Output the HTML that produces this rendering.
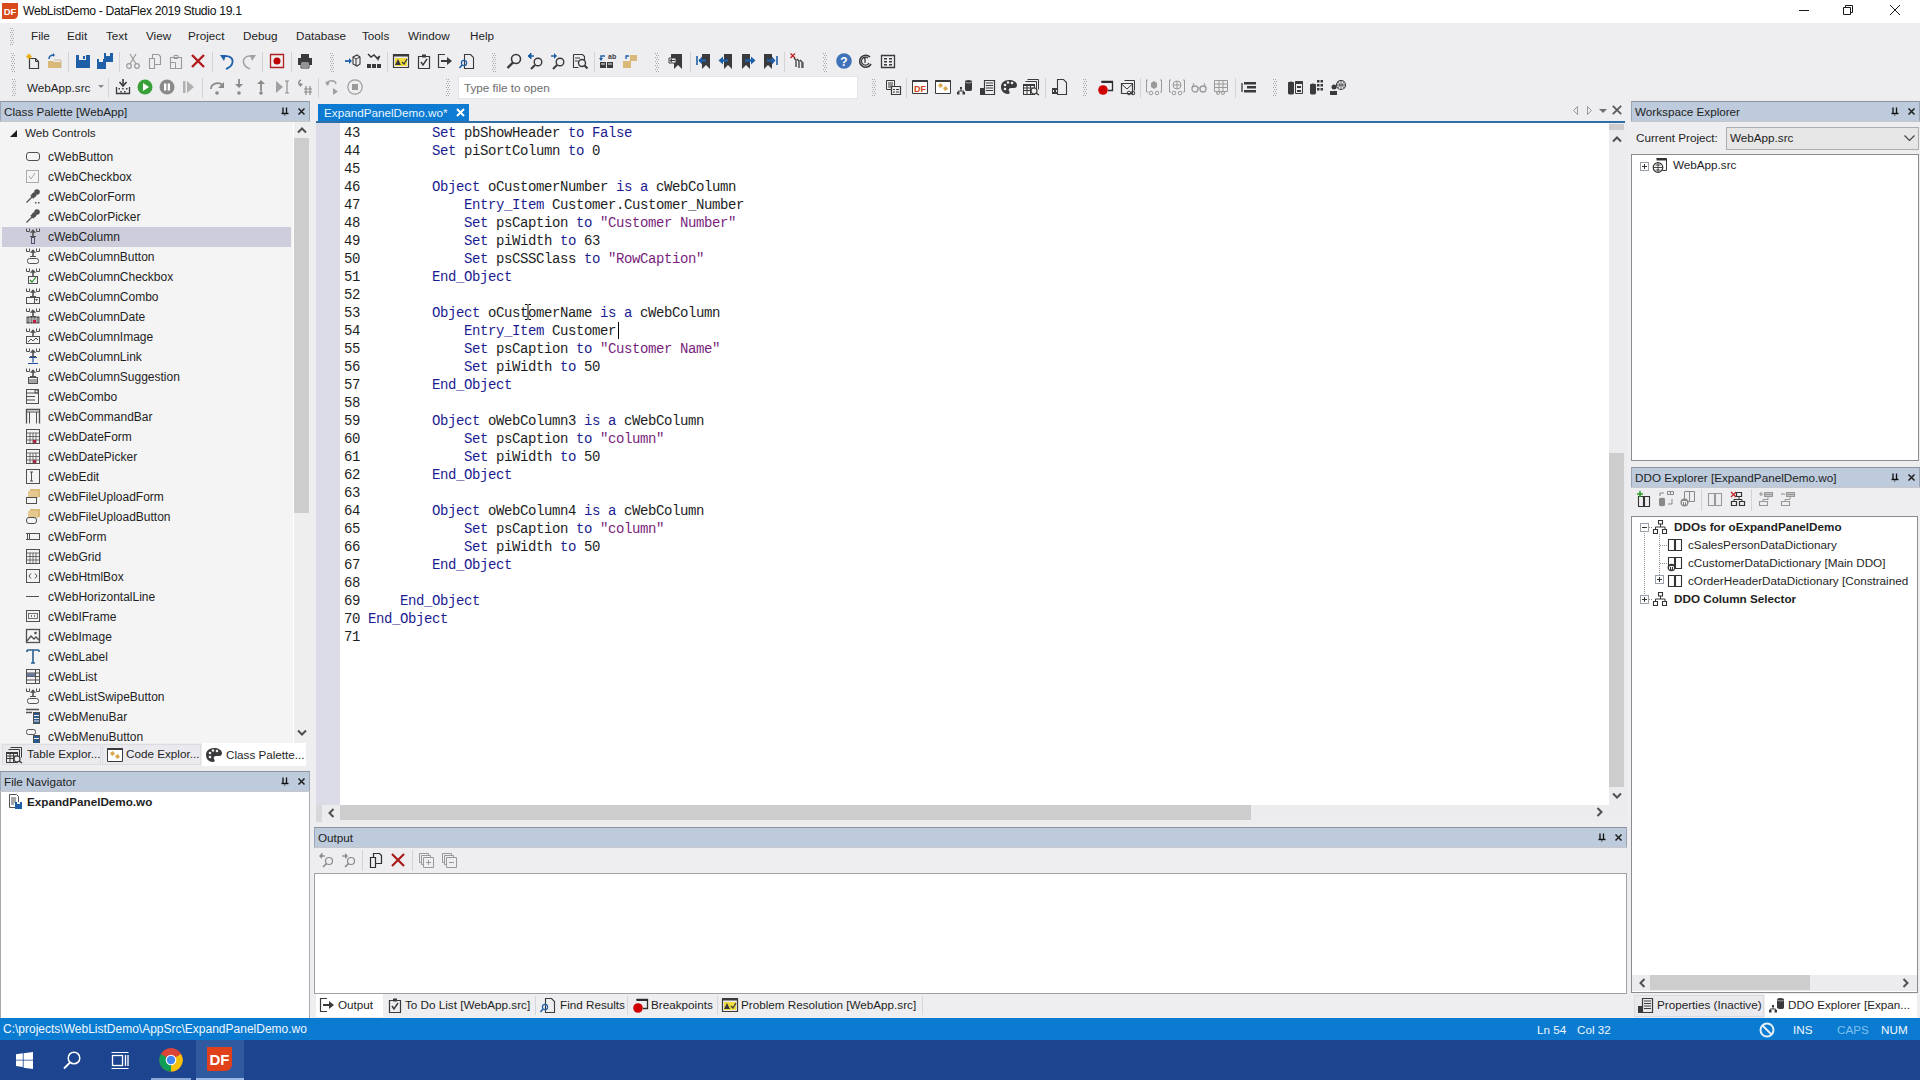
<!DOCTYPE html>
<html><head><meta charset="utf-8"><style>*{box-sizing:border-box;margin:0;padding:0}
html,body{width:1920px;height:1080px;overflow:hidden;background:#eeeef0;font-family:"Liberation Sans",sans-serif;font-size:12px;color:#1e1e1e}
.a{position:absolute}
.t{position:absolute;white-space:nowrap;line-height:15px}
svg{position:absolute;overflow:visible}
.code{position:absolute;font-family:"Liberation Mono",monospace;font-size:14px;letter-spacing:-0.4px;line-height:18px;white-space:pre;color:#1e1e1e}
.k{color:#1c1c92}
.s{color:#7a1f7e}
</style></head><body>
<div class="a" style="left:0px;top:0px;width:1920px;height:23px;background:#ffffff;"></div>
<svg style="left:2px;top:3px" width="16" height="16" viewBox="0 0 16 16"><path d="M0 0h16v11c0 3-2 5-5 5H0z" fill="#d84a1b"/><text x="8" y="12" font-size="9.5" font-family="Liberation Sans" font-weight="bold" fill="#fff" text-anchor="middle">DF</text></svg>
<div class="t" style="left:23px;top:4px;font-size:12.2px;color:#111;letter-spacing:-0.33px">WebListDemo - DataFlex 2019 Studio 19.1</div>
<div class="a" style="left:1799px;top:10px;width:10px;height:1px;background:#1a1a1a;"></div>
<svg style="left:1843px;top:5px" width="10" height="10" viewBox="0 0 10 10"><path d="M.5 2.5h7v7h-7z" fill="none" stroke="#1a1a1a"/><path d="M2.5 2.5V.5h7v7h-2" fill="none" stroke="#1a1a1a"/></svg>
<svg style="left:1890px;top:5px" width="10" height="10" viewBox="0 0 10 10"><path d="M0 0l10 10M10 0L0 10" stroke="#1a1a1a" stroke-width="1"/></svg>
<div class="a" style="left:10px;top:28px;width:1px;height:1px;background:#a8a8b0"></div><div class="a" style="left:11px;top:30px;width:1px;height:1px;background:#a8a8b0"></div><div class="a" style="left:10px;top:32px;width:1px;height:1px;background:#a8a8b0"></div><div class="a" style="left:11px;top:34px;width:1px;height:1px;background:#a8a8b0"></div><div class="a" style="left:10px;top:36px;width:1px;height:1px;background:#a8a8b0"></div><div class="a" style="left:11px;top:38px;width:1px;height:1px;background:#a8a8b0"></div><div class="a" style="left:10px;top:40px;width:1px;height:1px;background:#a8a8b0"></div><div class="a" style="left:11px;top:42px;width:1px;height:1px;background:#a8a8b0"></div><div class="a" style="left:10px;top:44px;width:1px;height:1px;background:#a8a8b0"></div><div class="a" style="left:12px;top:28px;width:1px;height:1px;background:#a8a8b0"></div><div class="a" style="left:13px;top:30px;width:1px;height:1px;background:#a8a8b0"></div><div class="a" style="left:12px;top:32px;width:1px;height:1px;background:#a8a8b0"></div><div class="a" style="left:13px;top:34px;width:1px;height:1px;background:#a8a8b0"></div><div class="a" style="left:12px;top:36px;width:1px;height:1px;background:#a8a8b0"></div><div class="a" style="left:13px;top:38px;width:1px;height:1px;background:#a8a8b0"></div><div class="a" style="left:12px;top:40px;width:1px;height:1px;background:#a8a8b0"></div><div class="a" style="left:13px;top:42px;width:1px;height:1px;background:#a8a8b0"></div><div class="a" style="left:12px;top:44px;width:1px;height:1px;background:#a8a8b0"></div>
<div class="t" style="left:31px;top:28px;font-size:11.7px;color:#1e1e1e;">File</div>
<div class="t" style="left:67px;top:28px;font-size:11.7px;color:#1e1e1e;">Edit</div>
<div class="t" style="left:106px;top:28px;font-size:11.7px;color:#1e1e1e;">Text</div>
<div class="t" style="left:146px;top:28px;font-size:11.7px;color:#1e1e1e;">View</div>
<div class="t" style="left:188px;top:28px;font-size:11.7px;color:#1e1e1e;">Project</div>
<div class="t" style="left:243px;top:28px;font-size:11.7px;color:#1e1e1e;">Debug</div>
<div class="t" style="left:296px;top:28px;font-size:11.7px;color:#1e1e1e;">Database</div>
<div class="t" style="left:362px;top:28px;font-size:11.7px;color:#1e1e1e;">Tools</div>
<div class="t" style="left:408px;top:28px;font-size:11.7px;color:#1e1e1e;">Window</div>
<div class="t" style="left:470px;top:28px;font-size:11.7px;color:#1e1e1e;">Help</div>
<div class="a" style="left:11px;top:53px;width:1px;height:1px;background:#a8a8b0"></div><div class="a" style="left:12px;top:55px;width:1px;height:1px;background:#a8a8b0"></div><div class="a" style="left:11px;top:57px;width:1px;height:1px;background:#a8a8b0"></div><div class="a" style="left:12px;top:59px;width:1px;height:1px;background:#a8a8b0"></div><div class="a" style="left:11px;top:61px;width:1px;height:1px;background:#a8a8b0"></div><div class="a" style="left:12px;top:63px;width:1px;height:1px;background:#a8a8b0"></div><div class="a" style="left:11px;top:65px;width:1px;height:1px;background:#a8a8b0"></div><div class="a" style="left:12px;top:67px;width:1px;height:1px;background:#a8a8b0"></div><div class="a" style="left:11px;top:69px;width:1px;height:1px;background:#a8a8b0"></div><div class="a" style="left:12px;top:71px;width:1px;height:1px;background:#a8a8b0"></div><div class="a" style="left:13px;top:53px;width:1px;height:1px;background:#a8a8b0"></div><div class="a" style="left:14px;top:55px;width:1px;height:1px;background:#a8a8b0"></div><div class="a" style="left:13px;top:57px;width:1px;height:1px;background:#a8a8b0"></div><div class="a" style="left:14px;top:59px;width:1px;height:1px;background:#a8a8b0"></div><div class="a" style="left:13px;top:61px;width:1px;height:1px;background:#a8a8b0"></div><div class="a" style="left:14px;top:63px;width:1px;height:1px;background:#a8a8b0"></div><div class="a" style="left:13px;top:65px;width:1px;height:1px;background:#a8a8b0"></div><div class="a" style="left:14px;top:67px;width:1px;height:1px;background:#a8a8b0"></div><div class="a" style="left:13px;top:69px;width:1px;height:1px;background:#a8a8b0"></div><div class="a" style="left:14px;top:71px;width:1px;height:1px;background:#a8a8b0"></div>
<svg style="left:25px;top:53px" width="16" height="16" viewBox="0 0 16 16"><path d="M4.5 5.5h6l3 3v7h-9z" fill="none" stroke="#3a3a3c" stroke-width="1.2"/><path d="M10.5 5.5v3h3" fill="none" stroke="#3a3a3c"/><circle cx="4" cy="3.5" r="2" fill="#f0b400"/><path d="M1 3.5h6M4 .5v6M2 1.5l4 4M6 1.5l-4 4" stroke="#e6a800" stroke-width=".7"/></svg>
<svg style="left:47px;top:53px" width="16" height="16" viewBox="0 0 16 16"><path d="M1 8h5l1 1h7v6H1z" fill="#d9b878"/><path d="M7 7h7v8" fill="none" stroke="#c8b89a"/><path d="M2 6c0-3 2-4 5-4" fill="none" stroke="#1f5fa8" stroke-width="1.5"/><path d="M6 0l2 2-2 2z" fill="#1f5fa8"/></svg>
<div class="a" style="left:68px;top:52px;width:1px;height:20px;background:#d2d2d8;"></div>
<svg style="left:75px;top:53px" width="16" height="16" viewBox="0 0 16 16"><path d="M1 2h14v13H1z" fill="#1f5fa8"/><path d="M4 2h7v5H4z" fill="#eeeef0"/><path d="M8 3h2v3H8z" fill="#1f5fa8"/></svg>
<svg style="left:97px;top:53px" width="16" height="16" viewBox="0 0 16 16"><path d="M7 0h9v9H7z" fill="#1f5fa8"/><path d="M9 0h4v3H9z" fill="#eeeef0"/><path d="M0 6h9v10H0z" fill="#1f5fa8"/><path d="M2 6h4v3H2z" fill="#eeeef0"/></svg>
<div class="a" style="left:119px;top:52px;width:1px;height:20px;background:#d2d2d8;"></div>
<svg style="left:125px;top:53px" width="16" height="16" viewBox="0 0 16 16"><circle cx="4" cy="13" r="2.3" fill="none" stroke="#9a9a9a" stroke-width="1.2"/><circle cx="12" cy="13" r="2.3" fill="none" stroke="#9a9a9a" stroke-width="1.2"/><path d="M5 11L11 1M11 11L5 1" stroke="#9a9a9a" stroke-width="1.2"/></svg>
<svg style="left:147px;top:53px" width="16" height="16" viewBox="0 0 16 16"><path d="M5.5 1.5h6l2 2v8h-8z" fill="none" stroke="#9a9a9a" stroke-width="1.1"/><path d="M2.5 5.5h5v10h-5z" fill="#eeeef0" stroke="#9a9a9a" stroke-width="1.1"/></svg>
<svg style="left:168px;top:53px" width="16" height="16" viewBox="0 0 16 16"><path d="M2.5 4.5h11v11h-11z" fill="none" stroke="#9a9a9a" stroke-width="1.1"/><path d="M6 2.5h4v3H6z" fill="none" stroke="#9a9a9a"/><path d="M2.5 9.5h5v6" fill="none" stroke="#9a9a9a"/></svg>
<svg style="left:190px;top:53px" width="16" height="16" viewBox="0 0 16 16"><path d="M2 2l12 12M14 2L2 14" stroke="#b01c1c" stroke-width="2.4"/></svg>
<div class="a" style="left:212px;top:52px;width:1px;height:20px;background:#d2d2d8;"></div>
<svg style="left:219px;top:53px" width="16" height="16" viewBox="0 0 16 16"><path d="M3 4c8-3 12 2 10 7-1 3-4 4-6 5" fill="none" stroke="#1f5fa8" stroke-width="1.8"/><path d="M1 2l6 0-2 6z" fill="#1f5fa8"/></svg>
<svg style="left:241px;top:53px" width="16" height="16" viewBox="0 0 16 16"><path d="M13 4c-8-3-12 2-10 7 1 3 4 4 6 5" fill="none" stroke="#a0a0a0" stroke-width="1.5"/><path d="M15 2l-6 0 2 6z" fill="#a0a0a0"/></svg>
<div class="a" style="left:262px;top:52px;width:1px;height:20px;background:#d2d2d8;"></div>
<svg style="left:269px;top:53px" width="16" height="16" viewBox="0 0 16 16"><path d="M1.5 1.5h13v13h-13z" fill="none" stroke="#b02020" stroke-width="1.3"/><circle cx="8" cy="8" r="3.5" fill="#c00000"/></svg>
<div class="a" style="left:291px;top:52px;width:1px;height:20px;background:#d2d2d8;"></div>
<svg style="left:297px;top:53px" width="16" height="16" viewBox="0 0 16 16"><path d="M4 1h8v4H4z" fill="#3a3a3c"/><path d="M1 5h14v7H1z" fill="#3a3a3c"/><path d="M4 9h8v6H4z" fill="#eeeef0" stroke="#3a3a3c"/><path d="M5 11h6M5 13h6" stroke="#3a3a3c"/></svg>
<div class="a" style="left:330px;top:53px;width:1px;height:1px;background:#a8a8b0"></div><div class="a" style="left:331px;top:55px;width:1px;height:1px;background:#a8a8b0"></div><div class="a" style="left:330px;top:57px;width:1px;height:1px;background:#a8a8b0"></div><div class="a" style="left:331px;top:59px;width:1px;height:1px;background:#a8a8b0"></div><div class="a" style="left:330px;top:61px;width:1px;height:1px;background:#a8a8b0"></div><div class="a" style="left:331px;top:63px;width:1px;height:1px;background:#a8a8b0"></div><div class="a" style="left:330px;top:65px;width:1px;height:1px;background:#a8a8b0"></div><div class="a" style="left:331px;top:67px;width:1px;height:1px;background:#a8a8b0"></div><div class="a" style="left:330px;top:69px;width:1px;height:1px;background:#a8a8b0"></div><div class="a" style="left:331px;top:71px;width:1px;height:1px;background:#a8a8b0"></div><div class="a" style="left:332px;top:53px;width:1px;height:1px;background:#a8a8b0"></div><div class="a" style="left:333px;top:55px;width:1px;height:1px;background:#a8a8b0"></div><div class="a" style="left:332px;top:57px;width:1px;height:1px;background:#a8a8b0"></div><div class="a" style="left:333px;top:59px;width:1px;height:1px;background:#a8a8b0"></div><div class="a" style="left:332px;top:61px;width:1px;height:1px;background:#a8a8b0"></div><div class="a" style="left:333px;top:63px;width:1px;height:1px;background:#a8a8b0"></div><div class="a" style="left:332px;top:65px;width:1px;height:1px;background:#a8a8b0"></div><div class="a" style="left:333px;top:67px;width:1px;height:1px;background:#a8a8b0"></div><div class="a" style="left:332px;top:69px;width:1px;height:1px;background:#a8a8b0"></div><div class="a" style="left:333px;top:71px;width:1px;height:1px;background:#a8a8b0"></div>
<svg style="left:344px;top:53px" width="16" height="16" viewBox="0 0 16 16"><path d="M1 8h6" stroke="#1f5fa8" stroke-width="1.8"/><path d="M5 5l3 3-3 3z" fill="#1f5fa8"/><path d="M9 4l4-2 3 2v7l-3 2-4-2z" fill="none" stroke="#3a3a3c" stroke-width="1.1"/><path d="M9 4l3 2 4-2M12 6v7" fill="none" stroke="#3a3a3c"/></svg>
<svg style="left:366px;top:53px" width="16" height="16" viewBox="0 0 16 16"><path d="M1 11h4v4H1zM6 11h4v4H6zM11 11h4v4h-4z" fill="#3a3a3c"/><path d="M2 1l3 3 3-2 3 3 3-2" fill="none" stroke="#3a3a3c" stroke-width="1.5"/><path d="M10 4l2 4 2-4z" fill="#3a3a3c"/></svg>
<div class="a" style="left:387px;top:52px;width:1px;height:20px;background:#d2d2d8;"></div>
<svg style="left:393px;top:53px" width="16" height="16" viewBox="0 0 16 16"><path d="M.5 1.5h15v13H.5z" fill="none" stroke="#3a3a3c" stroke-width="1.2"/><path d="M.5 1.5h15v2H.5z" fill="#3a3a3c"/><path d="M2 5h12v8H2z" fill="#f0dc40"/><path d="M5 6l-3 6h6z" fill="#3a3a3c"/><path d="M9 9l2 2 3-5" fill="none" stroke="#3a3a3c" stroke-width="1.3"/></svg>
<svg style="left:416px;top:53px" width="16" height="16" viewBox="0 0 16 16"><path d="M2.5 3.5h11v12h-11z" fill="none" stroke="#3a3a3c" stroke-width="1.2"/><path d="M6 1.5h4v3H6z" fill="#3a3a3c"/><path d="M5 9l2 3 4-6" fill="none" stroke="#3a3a3c" stroke-width="1.4"/></svg>
<svg style="left:437px;top:53px" width="16" height="16" viewBox="0 0 16 16"><path d="M8 1.5H1.5v13H8" fill="none" stroke="#3a3a3c" stroke-width="1.2"/><path d="M4 8h9" stroke="#3a3a3c" stroke-width="2"/><path d="M10 4l5 4-5 4z" fill="#3a3a3c"/></svg>
<svg style="left:459px;top:53px" width="16" height="16" viewBox="0 0 16 16"><path d="M5.5 1.5h6l3 3v11h-9z" fill="none" stroke="#3a3a3c" stroke-width="1.1"/><circle cx="5" cy="10" r="2.6" fill="none" stroke="#1f5fa8" stroke-width="1.2"/><path d="M3 12l-2.5 3" stroke="#1f5fa8" stroke-width="1.5"/></svg>
<div class="a" style="left:492px;top:53px;width:1px;height:1px;background:#a8a8b0"></div><div class="a" style="left:493px;top:55px;width:1px;height:1px;background:#a8a8b0"></div><div class="a" style="left:492px;top:57px;width:1px;height:1px;background:#a8a8b0"></div><div class="a" style="left:493px;top:59px;width:1px;height:1px;background:#a8a8b0"></div><div class="a" style="left:492px;top:61px;width:1px;height:1px;background:#a8a8b0"></div><div class="a" style="left:493px;top:63px;width:1px;height:1px;background:#a8a8b0"></div><div class="a" style="left:492px;top:65px;width:1px;height:1px;background:#a8a8b0"></div><div class="a" style="left:493px;top:67px;width:1px;height:1px;background:#a8a8b0"></div><div class="a" style="left:492px;top:69px;width:1px;height:1px;background:#a8a8b0"></div><div class="a" style="left:493px;top:71px;width:1px;height:1px;background:#a8a8b0"></div><div class="a" style="left:494px;top:53px;width:1px;height:1px;background:#a8a8b0"></div><div class="a" style="left:495px;top:55px;width:1px;height:1px;background:#a8a8b0"></div><div class="a" style="left:494px;top:57px;width:1px;height:1px;background:#a8a8b0"></div><div class="a" style="left:495px;top:59px;width:1px;height:1px;background:#a8a8b0"></div><div class="a" style="left:494px;top:61px;width:1px;height:1px;background:#a8a8b0"></div><div class="a" style="left:495px;top:63px;width:1px;height:1px;background:#a8a8b0"></div><div class="a" style="left:494px;top:65px;width:1px;height:1px;background:#a8a8b0"></div><div class="a" style="left:495px;top:67px;width:1px;height:1px;background:#a8a8b0"></div><div class="a" style="left:494px;top:69px;width:1px;height:1px;background:#a8a8b0"></div><div class="a" style="left:495px;top:71px;width:1px;height:1px;background:#a8a8b0"></div>
<svg style="left:506px;top:53px" width="16" height="16" viewBox="0 0 16 16"><circle cx="10" cy="6" r="4.5" fill="none" stroke="#3a3a3c" stroke-width="1.6"/><path d="M7 9.5L1.5 15" stroke="#3a3a3c" stroke-width="2.4"/></svg>
<svg style="left:528px;top:53px" width="16" height="16" viewBox="0 0 16 16"><circle cx="10" cy="9" r="3.8" fill="none" stroke="#3a3a3c" stroke-width="1.4"/><path d="M7 12l-4 4" stroke="#3a3a3c" stroke-width="2"/><path d="M6 3H1" stroke="#1f5fa8" stroke-width="1.5"/><path d="M3 0v6M3 0L0 3l3 3" fill="#1f5fa8" stroke="#1f5fa8"/></svg>
<svg style="left:550px;top:53px" width="16" height="16" viewBox="0 0 16 16"><circle cx="10" cy="9" r="3.8" fill="none" stroke="#3a3a3c" stroke-width="1.4"/><path d="M7 12l-4 4" stroke="#3a3a3c" stroke-width="2"/><path d="M1 3h5" stroke="#1f5fa8" stroke-width="1.5"/><path d="M4 0l3 3-3 3z" fill="#1f5fa8"/></svg>
<svg style="left:572px;top:53px" width="16" height="16" viewBox="0 0 16 16"><path d="M1.5 1.5h9l2 2v4" fill="none" stroke="#3a3a3c" stroke-width="1.1"/><path d="M1.5 1.5v13h5" fill="none" stroke="#3a3a3c" stroke-width="1.1"/><path d="M3 5h5M3 8h3" stroke="#3a3a3c"/><circle cx="10" cy="10" r="3.5" fill="none" stroke="#3a3a3c" stroke-width="1.4"/><path d="M12.5 12.5l3 3" stroke="#3a3a3c" stroke-width="2"/></svg>
<div class="a" style="left:594px;top:52px;width:1px;height:20px;background:#d2d2d8;"></div>
<svg style="left:599px;top:53px" width="16" height="16" viewBox="0 0 16 16"><path d="M1 9h6v6H1zM8 9h6v6H8z" fill="#3a3a3c"/><path d="M2 11h4M9 11h4" stroke="#eee" stroke-width="1"/><text x="9" y="6" font-size="7" font-family="Liberation Sans" font-weight="bold" fill="#3a3a3c">ab</text><path d="M2 7V3h4" fill="none" stroke="#1f5fa8" stroke-width="1.4"/><path d="M0 5l2 3 2-3z" fill="#1f5fa8"/></svg>
<svg style="left:622px;top:53px" width="16" height="16" viewBox="0 0 16 16"><path d="M8 2h7v6H8z" fill="#d9b878"/><path d="M1 8h8v7H1z" fill="#d9b878"/><path d="M4 6V3h3" fill="none" stroke="#1f5fa8" stroke-width="1.3"/></svg>
<div class="a" style="left:655px;top:53px;width:1px;height:1px;background:#a8a8b0"></div><div class="a" style="left:656px;top:55px;width:1px;height:1px;background:#a8a8b0"></div><div class="a" style="left:655px;top:57px;width:1px;height:1px;background:#a8a8b0"></div><div class="a" style="left:656px;top:59px;width:1px;height:1px;background:#a8a8b0"></div><div class="a" style="left:655px;top:61px;width:1px;height:1px;background:#a8a8b0"></div><div class="a" style="left:656px;top:63px;width:1px;height:1px;background:#a8a8b0"></div><div class="a" style="left:655px;top:65px;width:1px;height:1px;background:#a8a8b0"></div><div class="a" style="left:656px;top:67px;width:1px;height:1px;background:#a8a8b0"></div><div class="a" style="left:655px;top:69px;width:1px;height:1px;background:#a8a8b0"></div><div class="a" style="left:656px;top:71px;width:1px;height:1px;background:#a8a8b0"></div><div class="a" style="left:657px;top:53px;width:1px;height:1px;background:#a8a8b0"></div><div class="a" style="left:658px;top:55px;width:1px;height:1px;background:#a8a8b0"></div><div class="a" style="left:657px;top:57px;width:1px;height:1px;background:#a8a8b0"></div><div class="a" style="left:658px;top:59px;width:1px;height:1px;background:#a8a8b0"></div><div class="a" style="left:657px;top:61px;width:1px;height:1px;background:#a8a8b0"></div><div class="a" style="left:658px;top:63px;width:1px;height:1px;background:#a8a8b0"></div><div class="a" style="left:657px;top:65px;width:1px;height:1px;background:#a8a8b0"></div><div class="a" style="left:658px;top:67px;width:1px;height:1px;background:#a8a8b0"></div><div class="a" style="left:657px;top:69px;width:1px;height:1px;background:#a8a8b0"></div><div class="a" style="left:658px;top:71px;width:1px;height:1px;background:#a8a8b0"></div>
<svg style="left:668px;top:53px" width="16" height="16" viewBox="0 0 16 16"><path d="M3 1h11v15l-4-4-4 4V7H3z" fill="#3a3a3c"/><path d="M1 5h7v5H1z" fill="#eeeef0" stroke="#3a3a3c"/><path d="M2 7.5h5M4 6l-2 1.5L4 9" fill="none" stroke="#3a3a3c"/></svg>
<div class="a" style="left:690px;top:52px;width:1px;height:20px;background:#d2d2d8;"></div>
<svg style="left:696px;top:53px" width="16" height="16" viewBox="0 0 16 16"><path d="M5 1h9v15l-4-4-4 4V1z" fill="#3a3a3c"/><path d="M1 3v9" stroke="#1f5fa8" stroke-width="1.6"/><path d="M3 7.5h7" stroke="#1f5fa8" stroke-width="2.5"/><path d="M6 3.5L2.5 7.5 6 11.5z" fill="#1f5fa8"/></svg>
<svg style="left:718px;top:53px" width="16" height="16" viewBox="0 0 16 16"><path d="M5 1h9v15l-4-4-4 4V1z" fill="#3a3a3c"/><path d="M3 7.5h7" stroke="#1f5fa8" stroke-width="2.5"/><path d="M5 3.5L.5 7.5 5 11.5z" fill="#1f5fa8"/></svg>
<svg style="left:740px;top:53px" width="16" height="16" viewBox="0 0 16 16"><path d="M1 1h9v15l-4-4-4 4V1z" fill="#3a3a3c"/><path d="M5 7.5h7" stroke="#1f5fa8" stroke-width="2.5"/><path d="M11 3.5l4.5 4-4.5 4z" fill="#1f5fa8"/></svg>
<svg style="left:762px;top:53px" width="16" height="16" viewBox="0 0 16 16"><path d="M1 1h9v15l-4-4-4 4V1z" fill="#3a3a3c"/><path d="M15 3v9" stroke="#1f5fa8" stroke-width="1.6"/><path d="M5 7.5h7" stroke="#1f5fa8" stroke-width="2.5"/><path d="M10 3.5l3.5 4-3.5 4z" fill="#1f5fa8"/></svg>
<div class="a" style="left:784px;top:52px;width:1px;height:20px;background:#d2d2d8;"></div>
<svg style="left:790px;top:53px" width="16" height="16" viewBox="0 0 16 16"><path d="M.5 .5l4.5 4.5M5 .5L.5 5" stroke="#c02020" stroke-width="1.3"/><path d="M4 5l2 2v7M7 6l2 2v7M10 7l2 2v6" fill="none" stroke="#3a3a3c" stroke-width="1.3"/><path d="M13 9v6" stroke="#3a3a3c" stroke-width="1"/></svg>
<div class="a" style="left:823px;top:53px;width:1px;height:1px;background:#a8a8b0"></div><div class="a" style="left:824px;top:55px;width:1px;height:1px;background:#a8a8b0"></div><div class="a" style="left:823px;top:57px;width:1px;height:1px;background:#a8a8b0"></div><div class="a" style="left:824px;top:59px;width:1px;height:1px;background:#a8a8b0"></div><div class="a" style="left:823px;top:61px;width:1px;height:1px;background:#a8a8b0"></div><div class="a" style="left:824px;top:63px;width:1px;height:1px;background:#a8a8b0"></div><div class="a" style="left:823px;top:65px;width:1px;height:1px;background:#a8a8b0"></div><div class="a" style="left:824px;top:67px;width:1px;height:1px;background:#a8a8b0"></div><div class="a" style="left:823px;top:69px;width:1px;height:1px;background:#a8a8b0"></div><div class="a" style="left:824px;top:71px;width:1px;height:1px;background:#a8a8b0"></div><div class="a" style="left:825px;top:53px;width:1px;height:1px;background:#a8a8b0"></div><div class="a" style="left:826px;top:55px;width:1px;height:1px;background:#a8a8b0"></div><div class="a" style="left:825px;top:57px;width:1px;height:1px;background:#a8a8b0"></div><div class="a" style="left:826px;top:59px;width:1px;height:1px;background:#a8a8b0"></div><div class="a" style="left:825px;top:61px;width:1px;height:1px;background:#a8a8b0"></div><div class="a" style="left:826px;top:63px;width:1px;height:1px;background:#a8a8b0"></div><div class="a" style="left:825px;top:65px;width:1px;height:1px;background:#a8a8b0"></div><div class="a" style="left:826px;top:67px;width:1px;height:1px;background:#a8a8b0"></div><div class="a" style="left:825px;top:69px;width:1px;height:1px;background:#a8a8b0"></div><div class="a" style="left:826px;top:71px;width:1px;height:1px;background:#a8a8b0"></div>
<svg style="left:836px;top:53px" width="16" height="16" viewBox="0 0 16 16"><circle cx="8" cy="8" r="7.8" fill="#3f72b8"/><text x="8" y="13" font-size="12" font-family="Liberation Sans" font-weight="bold" fill="#fff" text-anchor="middle">?</text></svg>
<svg style="left:857px;top:53px" width="16" height="16" viewBox="0 0 16 16"><path d="M13 4A6 6 0 1 0 14 11" fill="none" stroke="#3a3a3c" stroke-width="1.6"/><path d="M11 5A4 4 0 1 0 12 10" fill="none" stroke="#3a3a3c" stroke-width="1.2"/><path d="M7 6l1-1v5" stroke="#3a3a3c" stroke-width="1.2" fill="none"/></svg>
<svg style="left:880px;top:53px" width="16" height="16" viewBox="0 0 16 16"><path d="M1.5 2.5h13v12h-13z" fill="none" stroke="#3a3a3c" stroke-width="1.3"/><path d="M4 5h3v1.5H4zM9 5h3v1.5H9zM4 8h3v1.5H4zM9 8h3v1.5H9zM4 11h3v1.5H4zM9 11h3v1.5H9z" fill="#3a3a3c"/></svg>
<div class="a" style="left:12px;top:79px;width:1px;height:1px;background:#a8a8b0"></div><div class="a" style="left:13px;top:81px;width:1px;height:1px;background:#a8a8b0"></div><div class="a" style="left:12px;top:83px;width:1px;height:1px;background:#a8a8b0"></div><div class="a" style="left:13px;top:85px;width:1px;height:1px;background:#a8a8b0"></div><div class="a" style="left:12px;top:87px;width:1px;height:1px;background:#a8a8b0"></div><div class="a" style="left:13px;top:89px;width:1px;height:1px;background:#a8a8b0"></div><div class="a" style="left:12px;top:91px;width:1px;height:1px;background:#a8a8b0"></div><div class="a" style="left:13px;top:93px;width:1px;height:1px;background:#a8a8b0"></div><div class="a" style="left:12px;top:95px;width:1px;height:1px;background:#a8a8b0"></div><div class="a" style="left:14px;top:79px;width:1px;height:1px;background:#a8a8b0"></div><div class="a" style="left:15px;top:81px;width:1px;height:1px;background:#a8a8b0"></div><div class="a" style="left:14px;top:83px;width:1px;height:1px;background:#a8a8b0"></div><div class="a" style="left:15px;top:85px;width:1px;height:1px;background:#a8a8b0"></div><div class="a" style="left:14px;top:87px;width:1px;height:1px;background:#a8a8b0"></div><div class="a" style="left:15px;top:89px;width:1px;height:1px;background:#a8a8b0"></div><div class="a" style="left:14px;top:91px;width:1px;height:1px;background:#a8a8b0"></div><div class="a" style="left:15px;top:93px;width:1px;height:1px;background:#a8a8b0"></div><div class="a" style="left:14px;top:95px;width:1px;height:1px;background:#a8a8b0"></div>
<div class="t" style="left:27px;top:80px;font-size:11.7px;color:#1e1e1e;">WebApp.src</div>
<svg style="left:98px;top:85px" width="6" height="3" viewBox="0 0 6 3"><path d="M0 0h6L3 3z" fill="#8a8a8a"/></svg>
<div class="a" style="left:108px;top:78px;width:1px;height:20px;background:#d2d2d8;"></div>
<svg style="left:115px;top:79px" width="16" height="16" viewBox="0 0 16 16"><path d="M1.5 8v6.5h13V8" fill="none" stroke="#3a3a3c" stroke-width="1.3"/><path d="M3.5 9h1.5v1.5H3.5zM7.2 9h1.5v1.5H7.2zM11 9h1.5v1.5H11zM5.3 12h1.5v1.5H5.3zM9 12h1.5v1.5H9z" fill="#3a3a3c"/><path d="M8 0v6" stroke="#3a3a3c" stroke-width="1.6"/><path d="M4.5 3l3.5 4 3.5-4" fill="none" stroke="#3a3a3c" stroke-width="1.6"/></svg>
<svg style="left:137px;top:79px" width="16" height="16" viewBox="0 0 16 16"><circle cx="8" cy="8" r="7.5" fill="#38a038"/><path d="M6 4v8l6-4z" fill="#fff"/></svg>
<svg style="left:159px;top:79px" width="16" height="16" viewBox="0 0 16 16"><circle cx="8" cy="8" r="7.5" fill="#8a8a8a"/><path d="M5 4.5h2.3v7H5zM8.7 4.5H11v7H8.7z" fill="#fff"/></svg>
<svg style="left:181px;top:79px" width="16" height="16" viewBox="0 0 16 16"><path d="M2 2h2.5v12H2z" fill="#b0b0b0"/><path d="M6 2v12l7-6z" fill="#b0b0b0"/></svg>
<div class="a" style="left:202px;top:78px;width:1px;height:20px;background:#d2d2d8;"></div>
<svg style="left:209px;top:79px" width="16" height="16" viewBox="0 0 16 16"><path d="M2 10c0-6 9-8 12-3" fill="none" stroke="#8a8a8a" stroke-width="1.8"/><path d="M15 3v6h-6z" fill="#8a8a8a"/><circle cx="8" cy="14" r="1.8" fill="#8a8a8a"/></svg>
<svg style="left:231px;top:79px" width="16" height="16" viewBox="0 0 16 16"><path d="M8 0v8" stroke="#8a8a8a" stroke-width="1.8"/><path d="M4 5l4 4 4-4z" fill="#8a8a8a"/><circle cx="8" cy="14" r="1.8" fill="#8a8a8a"/></svg>
<svg style="left:253px;top:79px" width="16" height="16" viewBox="0 0 16 16"><path d="M8 4v8" stroke="#8a8a8a" stroke-width="1.8"/><path d="M4 5l4-4 4 4z" fill="#8a8a8a"/><circle cx="8" cy="14" r="1.8" fill="#8a8a8a"/></svg>
<svg style="left:275px;top:79px" width="16" height="16" viewBox="0 0 16 16"><path d="M1 2v12l7-6z" fill="#a0a0a0"/><path d="M10 2h4M12 2v12M10 14h4" stroke="#8a8a8a" stroke-width="1.1"/></svg>
<svg style="left:297px;top:79px" width="16" height="16" viewBox="0 0 16 16"><path d="M4 1c-3 1-3 5 0 6" fill="none" stroke="#8a8a8a" stroke-width="1.5"/><path d="M6 5l-3 3v-4z" fill="#8a8a8a"/><path d="M7 10h8M7 13h8M9 7v9M13 7v9" stroke="#8a8a8a" stroke-width="1.2"/></svg>
<div class="a" style="left:318px;top:78px;width:1px;height:20px;background:#d2d2d8;"></div>
<svg style="left:324px;top:79px" width="16" height="16" viewBox="0 0 16 16"><path d="M3 6c0-5 8-6 9-1" fill="none" stroke="#a0a0a0" stroke-width="1.5"/><path d="M1 3l3 4 2-5z" fill="#a0a0a0"/><path d="M9 9v7l5-3.5z" fill="#a0a0a0"/></svg>
<svg style="left:347px;top:79px" width="16" height="16" viewBox="0 0 16 16"><circle cx="8" cy="8" r="7.2" fill="none" stroke="#9a9a9a" stroke-width="1.2"/><path d="M5 5h6v6H5z" fill="#9a9a9a"/></svg>
<div class="a" style="left:446px;top:79px;width:1px;height:1px;background:#a8a8b0"></div><div class="a" style="left:447px;top:81px;width:1px;height:1px;background:#a8a8b0"></div><div class="a" style="left:446px;top:83px;width:1px;height:1px;background:#a8a8b0"></div><div class="a" style="left:447px;top:85px;width:1px;height:1px;background:#a8a8b0"></div><div class="a" style="left:446px;top:87px;width:1px;height:1px;background:#a8a8b0"></div><div class="a" style="left:447px;top:89px;width:1px;height:1px;background:#a8a8b0"></div><div class="a" style="left:446px;top:91px;width:1px;height:1px;background:#a8a8b0"></div><div class="a" style="left:447px;top:93px;width:1px;height:1px;background:#a8a8b0"></div><div class="a" style="left:446px;top:95px;width:1px;height:1px;background:#a8a8b0"></div><div class="a" style="left:448px;top:79px;width:1px;height:1px;background:#a8a8b0"></div><div class="a" style="left:449px;top:81px;width:1px;height:1px;background:#a8a8b0"></div><div class="a" style="left:448px;top:83px;width:1px;height:1px;background:#a8a8b0"></div><div class="a" style="left:449px;top:85px;width:1px;height:1px;background:#a8a8b0"></div><div class="a" style="left:448px;top:87px;width:1px;height:1px;background:#a8a8b0"></div><div class="a" style="left:449px;top:89px;width:1px;height:1px;background:#a8a8b0"></div><div class="a" style="left:448px;top:91px;width:1px;height:1px;background:#a8a8b0"></div><div class="a" style="left:449px;top:93px;width:1px;height:1px;background:#a8a8b0"></div><div class="a" style="left:448px;top:95px;width:1px;height:1px;background:#a8a8b0"></div>
<div class="a" style="left:872px;top:79px;width:1px;height:1px;background:#a8a8b0"></div><div class="a" style="left:873px;top:81px;width:1px;height:1px;background:#a8a8b0"></div><div class="a" style="left:872px;top:83px;width:1px;height:1px;background:#a8a8b0"></div><div class="a" style="left:873px;top:85px;width:1px;height:1px;background:#a8a8b0"></div><div class="a" style="left:872px;top:87px;width:1px;height:1px;background:#a8a8b0"></div><div class="a" style="left:873px;top:89px;width:1px;height:1px;background:#a8a8b0"></div><div class="a" style="left:872px;top:91px;width:1px;height:1px;background:#a8a8b0"></div><div class="a" style="left:873px;top:93px;width:1px;height:1px;background:#a8a8b0"></div><div class="a" style="left:872px;top:95px;width:1px;height:1px;background:#a8a8b0"></div><div class="a" style="left:874px;top:79px;width:1px;height:1px;background:#a8a8b0"></div><div class="a" style="left:875px;top:81px;width:1px;height:1px;background:#a8a8b0"></div><div class="a" style="left:874px;top:83px;width:1px;height:1px;background:#a8a8b0"></div><div class="a" style="left:875px;top:85px;width:1px;height:1px;background:#a8a8b0"></div><div class="a" style="left:874px;top:87px;width:1px;height:1px;background:#a8a8b0"></div><div class="a" style="left:875px;top:89px;width:1px;height:1px;background:#a8a8b0"></div><div class="a" style="left:874px;top:91px;width:1px;height:1px;background:#a8a8b0"></div><div class="a" style="left:875px;top:93px;width:1px;height:1px;background:#a8a8b0"></div><div class="a" style="left:874px;top:95px;width:1px;height:1px;background:#a8a8b0"></div>
<svg style="left:885px;top:79px" width="16" height="16" viewBox="0 0 16 16"><path d="M1.5 1.5h8v9h-8z" fill="#eee" stroke="#3a3a3c"/><path d="M3 4h5M3 6h5M3 8h5" stroke="#3a3a3c"/><path d="M6.5 7.5h9v8h-9z" fill="#eee" stroke="#3a3a3c" stroke-width="1.2"/><path d="M8 10h2v1H8zM11 10h3v1h-3zM8 12.5h2v1H8zM11 12.5h3v1h-3z" fill="#3a3a3c"/></svg>
<div class="a" style="left:906px;top:78px;width:1px;height:20px;background:#d2d2d8;"></div>
<svg style="left:912px;top:79px" width="16" height="16" viewBox="0 0 16 16"><path d="M.5 1.5h15v13H.5z" fill="#fff" stroke="#3a3a3c"/><path d="M.5 1h15v2H.5z" fill="#3a3a3c"/><text x="8" y="13" font-size="9" font-family="Liberation Sans" font-weight="bold" fill="#d04020" text-anchor="middle">DF</text></svg>
<svg style="left:935px;top:79px" width="16" height="16" viewBox="0 0 16 16"><path d="M.5 1.5h15v13H.5z" fill="#fff" stroke="#3a3a3c"/><path d="M.5 1h15v2H.5z" fill="#3a3a3c"/><path d="M3 6l3-2 2 3-3 2zM8 9l3-2 2 3-3 2z" fill="#d9a850"/></svg>
<svg style="left:957px;top:79px" width="16" height="16" viewBox="0 0 16 16"><path d="M8 2.5a3.5 1.5 0 0 1 7 0v8a3.5 1.5 0 0 1-7 0z" fill="#3a3a3c"/><path d="M8 2.5a3.5 1.5 0 0 0 7 0" fill="none" stroke="#eee" stroke-width=".6"/><path d="M3 8h2v2H3zM0 13h2.5v2.5H0zM5.5 13H8v2.5H5.5z" fill="#3a3a3c"/><path d="M4 10v2M1.2 13v-1h5.5v1" fill="none" stroke="#3a3a3c"/></svg>
<svg style="left:979px;top:79px" width="16" height="16" viewBox="0 0 16 16"><path d="M5.5 1.5h10v14h-10z" fill="none" stroke="#3a3a3c" stroke-width="1.2"/><path d="M7 4h7M7 6.5h7M7 9h7M7 11.5h7" stroke="#3a3a3c" stroke-width="1"/><path d="M1 9h4v7H1z" fill="#3a3a3c"/></svg>
<svg style="left:1001px;top:79px" width="16" height="16" viewBox="0 0 16 16"><path d="M8 1C3 1 0 4 0 8s3 7 7 7c2 0 2-2 1-3s0-3 2-3h3c2 0 3-1 3-3C16 3 12 1 8 1z" fill="#3a3a3c"/><circle cx="4" cy="6" r="1.3" fill="#eee"/><circle cx="7" cy="3.5" r="1.3" fill="#eee"/><circle cx="11" cy="4" r="1.3" fill="#eee"/><circle cx="4" cy="10" r="1.3" fill="#eee"/></svg>
<svg style="left:1023px;top:79px" width="16" height="16" viewBox="0 0 16 16"><path d="M4.5 .5h11v10" fill="none" stroke="#3a3a3c"/><path d="M2.5 2.5h11v10" fill="none" stroke="#3a3a3c"/><path d="M0 5h12v11H0z" fill="#3a3a3c"/><path d="M1 7h10v8H1z" fill="#eee"/><path d="M1 9h10M1 11.5h10M4 7v8M7.5 7v8" stroke="#3a3a3c"/><circle cx="11" cy="12" r="3" fill="#eee" stroke="#3a3a3c" stroke-width="1.2"/><path d="M13 14l3 2" stroke="#3a3a3c" stroke-width="1.5"/></svg>
<div class="a" style="left:1045px;top:78px;width:1px;height:20px;background:#d2d2d8;"></div>
<svg style="left:1051px;top:79px" width="16" height="16" viewBox="0 0 16 16"><path d="M6.5 .5h6l3 3v12h-9z" fill="none" stroke="#3a3a3c" stroke-width="1.1"/><path d="M1 9h6v6H1z" fill="#3a3a3c"/><path d="M3 11l-1 1 1 1M5 11l1 1-1 1" stroke="#eee" fill="none"/></svg>
<div class="a" style="left:1083px;top:79px;width:1px;height:1px;background:#a8a8b0"></div><div class="a" style="left:1084px;top:81px;width:1px;height:1px;background:#a8a8b0"></div><div class="a" style="left:1083px;top:83px;width:1px;height:1px;background:#a8a8b0"></div><div class="a" style="left:1084px;top:85px;width:1px;height:1px;background:#a8a8b0"></div><div class="a" style="left:1083px;top:87px;width:1px;height:1px;background:#a8a8b0"></div><div class="a" style="left:1084px;top:89px;width:1px;height:1px;background:#a8a8b0"></div><div class="a" style="left:1083px;top:91px;width:1px;height:1px;background:#a8a8b0"></div><div class="a" style="left:1084px;top:93px;width:1px;height:1px;background:#a8a8b0"></div><div class="a" style="left:1083px;top:95px;width:1px;height:1px;background:#a8a8b0"></div><div class="a" style="left:1085px;top:79px;width:1px;height:1px;background:#a8a8b0"></div><div class="a" style="left:1086px;top:81px;width:1px;height:1px;background:#a8a8b0"></div><div class="a" style="left:1085px;top:83px;width:1px;height:1px;background:#a8a8b0"></div><div class="a" style="left:1086px;top:85px;width:1px;height:1px;background:#a8a8b0"></div><div class="a" style="left:1085px;top:87px;width:1px;height:1px;background:#a8a8b0"></div><div class="a" style="left:1086px;top:89px;width:1px;height:1px;background:#a8a8b0"></div><div class="a" style="left:1085px;top:91px;width:1px;height:1px;background:#a8a8b0"></div><div class="a" style="left:1086px;top:93px;width:1px;height:1px;background:#a8a8b0"></div><div class="a" style="left:1085px;top:95px;width:1px;height:1px;background:#a8a8b0"></div>
<svg style="left:1097px;top:79px" width="16" height="16" viewBox="0 0 16 16"><circle cx="6" cy="11" r="4.8" fill="#d00000"/><path d="M4.5 2.5h11v9H11" fill="none" stroke="#2d2d30" stroke-width="1.3"/><path d="M4.5 2h11v2h-11z" fill="#2d2d30"/></svg>
<svg style="left:1119px;top:79px" width="16" height="16" viewBox="0 0 16 16"><path d="M2.5 4.5h11v10h-11z" fill="none" stroke="#3a3a3c" stroke-width="1.2"/><path d="M2.5 5l5.5 5 5.5-5" fill="none" stroke="#3a3a3c"/><path d="M5.5 1.5h10v10" fill="none" stroke="#3a3a3c"/><circle cx="10" cy="14" r="1.8" fill="none" stroke="#3a3a3c"/><circle cx="14" cy="14" r="1.8" fill="none" stroke="#3a3a3c"/></svg>
<div class="a" style="left:1140px;top:78px;width:1px;height:20px;background:#d2d2d8;"></div>
<svg style="left:1146px;top:79px" width="16" height="16" viewBox="0 0 16 16"><path d="M2 1H.5v12H2M14 1h1.5v12H14" fill="none" stroke="#999"/><path d="M5 4l3-2 3 2v4l-3 2-3-2z" fill="#999"/><circle cx="5" cy="14" r="1.8" fill="none" stroke="#999"/><circle cx="11" cy="14" r="1.8" fill="none" stroke="#999"/></svg>
<svg style="left:1169px;top:79px" width="16" height="16" viewBox="0 0 16 16"><path d="M2 1H.5v12H2M14 1h1.5v12H14" fill="none" stroke="#999"/><circle cx="8" cy="6" r="4" fill="none" stroke="#999"/><path d="M4 6h8M8 2v8" stroke="#999"/><circle cx="5" cy="14" r="1.8" fill="none" stroke="#999"/><circle cx="11" cy="14" r="1.8" fill="none" stroke="#999"/></svg>
<svg style="left:1191px;top:79px" width="16" height="16" viewBox="0 0 16 16"><circle cx="4" cy="10" r="3" fill="none" stroke="#999" stroke-width="1.3"/><circle cx="12" cy="10" r="3" fill="none" stroke="#999" stroke-width="1.3"/><path d="M7 9h2M1 9l2-5M15 9l-2-5" stroke="#999"/></svg>
<svg style="left:1213px;top:79px" width="16" height="16" viewBox="0 0 16 16"><path d="M1.5 1.5h13v11h-13z" fill="none" stroke="#999"/><path d="M1.5 5h13M1.5 8.5h13M6 1.5v11M10 1.5v11" stroke="#999"/><circle cx="5" cy="14" r="1.5" fill="none" stroke="#999"/><circle cx="10" cy="14" r="1.5" fill="none" stroke="#999"/></svg>
<div class="a" style="left:1235px;top:78px;width:1px;height:20px;background:#d2d2d8;"></div>
<svg style="left:1241px;top:79px" width="16" height="16" viewBox="0 0 16 16"><path d="M3 3h12v2.5H3zM6 7h9v2.5H6zM3 11h12v2.5H3z" fill="#3a3a3c"/><path d="M1 4v9" stroke="#3a3a3c" stroke-width="1.3"/></svg>
<div class="a" style="left:1273px;top:79px;width:1px;height:1px;background:#a8a8b0"></div><div class="a" style="left:1274px;top:81px;width:1px;height:1px;background:#a8a8b0"></div><div class="a" style="left:1273px;top:83px;width:1px;height:1px;background:#a8a8b0"></div><div class="a" style="left:1274px;top:85px;width:1px;height:1px;background:#a8a8b0"></div><div class="a" style="left:1273px;top:87px;width:1px;height:1px;background:#a8a8b0"></div><div class="a" style="left:1274px;top:89px;width:1px;height:1px;background:#a8a8b0"></div><div class="a" style="left:1273px;top:91px;width:1px;height:1px;background:#a8a8b0"></div><div class="a" style="left:1274px;top:93px;width:1px;height:1px;background:#a8a8b0"></div><div class="a" style="left:1273px;top:95px;width:1px;height:1px;background:#a8a8b0"></div><div class="a" style="left:1275px;top:79px;width:1px;height:1px;background:#a8a8b0"></div><div class="a" style="left:1276px;top:81px;width:1px;height:1px;background:#a8a8b0"></div><div class="a" style="left:1275px;top:83px;width:1px;height:1px;background:#a8a8b0"></div><div class="a" style="left:1276px;top:85px;width:1px;height:1px;background:#a8a8b0"></div><div class="a" style="left:1275px;top:87px;width:1px;height:1px;background:#a8a8b0"></div><div class="a" style="left:1276px;top:89px;width:1px;height:1px;background:#a8a8b0"></div><div class="a" style="left:1275px;top:91px;width:1px;height:1px;background:#a8a8b0"></div><div class="a" style="left:1276px;top:93px;width:1px;height:1px;background:#a8a8b0"></div><div class="a" style="left:1275px;top:95px;width:1px;height:1px;background:#a8a8b0"></div>
<svg style="left:1287px;top:79px" width="16" height="16" viewBox="0 0 16 16"><path d="M1 4a3 1.5 0 0 1 6 0v10a3 1.5 0 0 1-6 0z" fill="#3a3a3c"/><path d="M8.5 2.5h7v12h-7z" fill="none" stroke="#3a3a3c"/><path d="M8.5 2h7v3h-7zM10 7h4v2h-4zM10 11h4v2h-4z" fill="#3a3a3c"/></svg>
<svg style="left:1309px;top:79px" width="16" height="16" viewBox="0 0 16 16"><path d="M1 6a3 1.5 0 0 1 6 0v8a3 1.5 0 0 1-6 0z" fill="#3a3a3c"/><path d="M8 1h2.5v2.5H8zM11.5 1H14v2.5h-2.5zM8 5h2.5v2.5H8zM11.5 5H14v2.5h-2.5zM8 9h2.5v2.5H8zM11.5 9H14v2.5h-2.5z" fill="#3a3a3c"/></svg>
<svg style="left:1330px;top:79px" width="16" height="16" viewBox="0 0 16 16"><circle cx="4" cy="8" r="2.5" fill="#3a3a3c"/><path d="M0 12h7v4H0z" fill="#3a3a3c"/><circle cx="11" cy="6" r="4.5" fill="none" stroke="#3a3a3c" stroke-width="1.1"/><path d="M6.5 6h9M11 1.5v9M8 3c2 2 2 4 0 6M14 3c-2 2-2 4 0 6" fill="none" stroke="#3a3a3c" stroke-width=".8"/></svg>
<div class="a" style="left:458px;top:76px;width:400px;height:23px;background:#ffffff;border:1px solid #e4e4ea"></div>
<div class="t" style="left:464px;top:80px;font-size:11.7px;color:#6d6d6d;">Type file to open</div>
<div class="a" style="left:0px;top:101px;width:310px;height:21px;background:#bdcbdc;border:1px solid #9aa4b2;border-top-color:#8a929e;border-bottom:2px solid #c2c9d3"></div><div class="t" style="left:4px;top:104px;font-size:11.7px;color:#1e1e1e;">Class Palette [WebApp]</div><svg style="left:281px;top:107px" width="8" height="10" viewBox="0 0 8 10"><path d="M2 .5v6M5.5 .5v6" stroke="#111" stroke-width="1.3" fill="none"/><path d="M.5 6.5h7" stroke="#111" stroke-width="1.4"/><path d="M3.8 7v2" stroke="#555" stroke-width="1"/></svg><svg style="left:298px;top:108px" width="7" height="7" viewBox="0 0 7 7"><path d="M.5 .5l6 6M6.5 .5l-6 6" stroke="#1e1e1e" stroke-width="1.5"/></svg>
<div class="a" style="left:0px;top:122px;width:294px;height:621px;background:#f4f4f4;"></div>
<div class="a" style="left:293px;top:122px;width:1px;height:621px;background:#ffffff;"></div>
<div class="a" style="left:294px;top:122px;width:18px;height:621px;background:#eeeeee;"></div>
<div class="a" style="left:294px;top:138px;width:15px;height:375px;background:#cdcdcd;"></div>
<svg style="left:297px;top:126px" width="10" height="8" viewBox="0 0 10 8"><path d="M1 6.5l4-4 4 4" fill="none" stroke="#505050" stroke-width="2"/></svg>
<svg style="left:297px;top:729px" width="10" height="8" viewBox="0 0 10 8"><path d="M1 1.5l4 4 4-4" fill="none" stroke="#505050" stroke-width="2"/></svg>
<svg style="left:10px;top:130px" width="7" height="7" viewBox="0 0 7 7"><path d="M7 0v7H0z" fill="#1e1e1e"/></svg>
<div class="t" style="left:25px;top:125px;font-size:11.7px;color:#1e1e1e;">Web Controls</div>
<div class="a" style="left:2px;top:227px;width:289px;height:20px;background:#cdcddc;"></div>
<svg style="left:25px;top:148px" width="16" height="16" viewBox="0 0 16 16"><rect x="1.5" y="4.5" width="13" height="8" rx="2.5" fill="none" stroke="#505050"/></svg>
<div class="t" style="left:48px;top:150px;font-size:12px;color:#1e1e1e;">cWebButton</div>
<svg style="left:25px;top:168px" width="16" height="16" viewBox="0 0 16 16"><rect x="1.5" y="2.5" width="12" height="12" fill="none" stroke="#aaa"/><path d="M4 8l2 3 4-6" fill="none" stroke="#aaa"/></svg>
<div class="t" style="left:48px;top:170px;font-size:12px;color:#1e1e1e;">cWebCheckbox</div>
<svg style="left:25px;top:188px" width="16" height="16" viewBox="0 0 16 16"><path d="M1.5 14.5l7-7" stroke="#505050" stroke-width="1.3"/><path d="M6 7l3 3M7.5 5.5l3 3" stroke="#505050" stroke-width="2"/><circle cx="12" cy="4" r="2.8" fill="#505050"/><path d="M8 5l3 3" stroke="#505050" stroke-width="2.5"/><path d="M10 14h1.5v1.5H10zM13 14h1.5v1.5H13z" fill="#505050"/></svg>
<div class="t" style="left:48px;top:190px;font-size:12px;color:#1e1e1e;">cWebColorForm</div>
<svg style="left:25px;top:208px" width="16" height="16" viewBox="0 0 16 16"><path d="M1.5 14.5l7-7" stroke="#505050" stroke-width="1.3"/><path d="M6 7l3 3M7.5 5.5l3 3" stroke="#505050" stroke-width="2"/><circle cx="12" cy="4" r="2.8" fill="#505050"/><path d="M8 5l3 3" stroke="#505050" stroke-width="2.5"/></svg>
<div class="t" style="left:48px;top:210px;font-size:12px;color:#1e1e1e;">cWebColorPicker</div>
<svg style="left:25px;top:228px" width="16" height="16" viewBox="0 0 16 16"><path d="M1.5 .5v3h3v-3M11.5 .5v3h3v-3" fill="none" stroke="#505050"/><path d="M8 8V3" stroke="#505050" stroke-width="1.6"/><path d="M4.8 4.8L8 1.2l3.2 3.6z" fill="#505050"/><path d="M5 8.5h6" stroke="#505050"/><rect x="6.5" y="9.5" width="3" height="6" fill="none" stroke="#505070"/></svg>
<div class="t" style="left:48px;top:230px;font-size:12px;color:#1e1e1e;">cWebColumn</div>
<svg style="left:25px;top:248px" width="16" height="16" viewBox="0 0 16 16"><path d="M1.5 .5v3h3v-3M11.5 .5v3h3v-3" fill="none" stroke="#505050"/><path d="M8 8V3" stroke="#505050" stroke-width="1.6"/><path d="M4.8 4.8L8 1.2l3.2 3.6z" fill="#505050"/><path d="M5 8.5h6" stroke="#505050"/><rect x="2.5" y="10.5" width="11" height="5" rx="2" fill="none" stroke="#505050"/></svg>
<div class="t" style="left:48px;top:250px;font-size:12px;color:#1e1e1e;">cWebColumnButton</div>
<svg style="left:25px;top:268px" width="16" height="16" viewBox="0 0 16 16"><path d="M1.5 .5v3h3v-3M11.5 .5v3h3v-3" fill="none" stroke="#505050"/><path d="M8 8V3" stroke="#505050" stroke-width="1.6"/><path d="M4.8 4.8L8 1.2l3.2 3.6z" fill="#505050"/><path d="M5 8.5h6" stroke="#505050"/><rect x="3.5" y="8.5" width="9" height="7" fill="none" stroke="#505050"/><path d="M5 12l2 2 4-5" fill="none" stroke="#2a8a2a" stroke-width="1.2"/></svg>
<div class="t" style="left:48px;top:270px;font-size:12px;color:#1e1e1e;">cWebColumnCheckbox</div>
<svg style="left:25px;top:288px" width="16" height="16" viewBox="0 0 16 16"><path d="M1.5 .5v3h3v-3M11.5 .5v3h3v-3" fill="none" stroke="#505050"/><path d="M8 8V3" stroke="#505050" stroke-width="1.6"/><path d="M4.8 4.8L8 1.2l3.2 3.6z" fill="#505050"/><path d="M5 8.5h6" stroke="#505050"/><rect x="1.5" y="9.5" width="13" height="6" fill="none" stroke="#505050"/><path d="M10 11h3l-1.5 2z" fill="#505050"/><path d="M9.5 9.5v6" stroke="#505050"/></svg>
<div class="t" style="left:48px;top:290px;font-size:12px;color:#1e1e1e;">cWebColumnCombo</div>
<svg style="left:25px;top:308px" width="16" height="16" viewBox="0 0 16 16"><path d="M1.5 .5v3h3v-3M11.5 .5v3h3v-3" fill="none" stroke="#505050"/><path d="M8 8V3" stroke="#505050" stroke-width="1.6"/><path d="M4.8 4.8L8 1.2l3.2 3.6z" fill="#505050"/><path d="M5 8.5h6" stroke="#505050"/><rect x="1.5" y="8.5" width="13" height="7" fill="#505050"/><path d="M2 11h12M2 13h12M5 9v6M8 9v6M11 9v6" stroke="#eee" stroke-width=".7"/><rect x="8" y="12" width="3" height="3" fill="#c02040"/></svg>
<div class="t" style="left:48px;top:310px;font-size:12px;color:#1e1e1e;">cWebColumnDate</div>
<svg style="left:25px;top:328px" width="16" height="16" viewBox="0 0 16 16"><path d="M1.5 .5v3h3v-3M11.5 .5v3h3v-3" fill="none" stroke="#505050"/><path d="M8 8V3" stroke="#505050" stroke-width="1.6"/><path d="M4.8 4.8L8 1.2l3.2 3.6z" fill="#505050"/><path d="M5 8.5h6" stroke="#505050"/><rect x="1.5" y="8.5" width="13" height="7" fill="none" stroke="#505050"/><path d="M3 14l3-3 2 2 3-3 2 2" fill="none" stroke="#505050"/></svg>
<div class="t" style="left:48px;top:330px;font-size:12px;color:#1e1e1e;">cWebColumnImage</div>
<svg style="left:25px;top:348px" width="16" height="16" viewBox="0 0 16 16"><path d="M1.5 .5v3h3v-3M11.5 .5v3h3v-3" fill="none" stroke="#505050"/><path d="M8 8V3" stroke="#505050" stroke-width="1.6"/><path d="M4.8 4.8L8 1.2l3.2 3.6z" fill="#505050"/><path d="M5 8.5h6" stroke="#505050"/><path d="M4 9.5h8M8 9.5v5" stroke="#2050a0" stroke-width="1.2"/><path d="M3 15.5h10" stroke="#2050a0"/></svg>
<div class="t" style="left:48px;top:350px;font-size:12px;color:#1e1e1e;">cWebColumnLink</div>
<svg style="left:25px;top:368px" width="16" height="16" viewBox="0 0 16 16"><path d="M1.5 .5v3h3v-3M11.5 .5v3h3v-3" fill="none" stroke="#505050"/><path d="M8 8V3" stroke="#505050" stroke-width="1.6"/><path d="M4.8 4.8L8 1.2l3.2 3.6z" fill="#505050"/><path d="M5 8.5h6" stroke="#505050"/><rect x="3.5" y="9.5" width="9" height="6" fill="none" stroke="#505050"/><path d="M4 12h8M4 14h8" stroke="#505050"/></svg>
<div class="t" style="left:48px;top:370px;font-size:12px;color:#1e1e1e;">cWebColumnSuggestion</div>
<svg style="left:25px;top:388px" width="16" height="16" viewBox="0 0 16 16"><rect x="1.5" y="1.5" width="12" height="14" fill="none" stroke="#505050"/><path d="M2 5h11M2 8.5h8M2 12h8" stroke="#505050"/><path d="M10 2h3v3h-3z" fill="none" stroke="#505050"/></svg>
<div class="t" style="left:48px;top:390px;font-size:12px;color:#1e1e1e;">cWebCombo</div>
<svg style="left:25px;top:408px" width="16" height="16" viewBox="0 0 16 16"><path d="M1.5 15.5V1.5h13v14" fill="none" stroke="#505050" stroke-width="1.3"/><path d="M1.5 4h13M4.5 4v11.5M11.5 4v11.5" stroke="#505050"/></svg>
<div class="t" style="left:48px;top:410px;font-size:12px;color:#1e1e1e;">cWebCommandBar</div>
<svg style="left:25px;top:428px" width="16" height="16" viewBox="0 0 16 16"><rect x="1.5" y="1.5" width="13" height="14" fill="none" stroke="#505050"/><path d="M1.5 5h13M1.5 8.5h13M1.5 12h13M5 5v10M8 5v10M11 5v10" stroke="#505050" stroke-width=".8"/><rect x="8" y="12" width="3" height="3" fill="#b02040"/></svg>
<div class="t" style="left:48px;top:430px;font-size:12px;color:#1e1e1e;">cWebDateForm</div>
<svg style="left:25px;top:448px" width="16" height="16" viewBox="0 0 16 16"><rect x="1.5" y="1.5" width="13" height="14" fill="none" stroke="#505050"/><path d="M1.5 5h13M1.5 8.5h13M1.5 12h13M5 5v10M8 5v10M11 5v10" stroke="#505050" stroke-width=".8"/><rect x="8" y="12" width="3" height="3" fill="#b02040"/></svg>
<div class="t" style="left:48px;top:450px;font-size:12px;color:#1e1e1e;">cWebDatePicker</div>
<svg style="left:25px;top:468px" width="16" height="16" viewBox="0 0 16 16"><rect x="1.5" y="1.5" width="13" height="14" fill="none" stroke="#505050"/><path d="M5 4h3M6.5 4v9M5 13h3" stroke="#505050"/></svg>
<div class="t" style="left:48px;top:470px;font-size:12px;color:#1e1e1e;">cWebEdit</div>
<svg style="left:25px;top:488px" width="16" height="16" viewBox="0 0 16 16"><path d="M5 1h10v8H5z" fill="#d9b878"/><path d="M3 3h10v7H3z" fill="#e4c890"/><rect x="1.5" y="9.5" width="10" height="6" fill="#f5f5f5" stroke="#505050"/></svg>
<div class="t" style="left:48px;top:490px;font-size:12px;color:#1e1e1e;">cWebFileUploadForm</div>
<svg style="left:25px;top:508px" width="16" height="16" viewBox="0 0 16 16"><path d="M5 1h10v8H5z" fill="#d9b878"/><path d="M3 3h10v7H3z" fill="#e4c890"/><rect x="1.5" y="9.5" width="10" height="6" rx="2.5" fill="#f5f5f5" stroke="#505050"/></svg>
<div class="t" style="left:48px;top:510px;font-size:12px;color:#1e1e1e;">cWebFileUploadButton</div>
<svg style="left:25px;top:528px" width="16" height="16" viewBox="0 0 16 16"><rect x="4.5" y="5.5" width="10" height="6" fill="none" stroke="#505050"/><path d="M1 5.5h3M1 11.5h3M2.5 5.5v6" stroke="#505050"/></svg>
<div class="t" style="left:48px;top:530px;font-size:12px;color:#1e1e1e;">cWebForm</div>
<svg style="left:25px;top:548px" width="16" height="16" viewBox="0 0 16 16"><rect x="1.5" y="1.5" width="13" height="14" fill="none" stroke="#505050"/><path d="M1.5 5h13M1.5 8.5h13M1.5 12h13M5 5v10M8 5v10M11 5v10" stroke="#505050" stroke-width=".8"/></svg>
<div class="t" style="left:48px;top:550px;font-size:12px;color:#1e1e1e;">cWebGrid</div>
<svg style="left:25px;top:568px" width="16" height="16" viewBox="0 0 16 16"><rect x="1.5" y="1.5" width="13" height="13" fill="none" stroke="#505050"/><path d="M6 5.5l-2 2.5 2 2.5M10 5.5l2 2.5-2 2.5" fill="none" stroke="#505050"/></svg>
<div class="t" style="left:48px;top:570px;font-size:12px;color:#1e1e1e;">cWebHtmlBox</div>
<svg style="left:25px;top:588px" width="16" height="16" viewBox="0 0 16 16"><path d="M1 8.5h13" stroke="#505050"/></svg>
<div class="t" style="left:48px;top:590px;font-size:12px;color:#1e1e1e;">cWebHorizontalLine</div>
<svg style="left:25px;top:608px" width="16" height="16" viewBox="0 0 16 16"><rect x="1.5" y="2.5" width="13" height="11" fill="none" stroke="#505050"/><rect x="3.5" y="5.5" width="9" height="5" fill="none" stroke="#505050" stroke-width=".8"/><path d="M7 7l-1 1 1 1M9 7l1 1-1 1" fill="none" stroke="#505050" stroke-width=".8"/></svg>
<div class="t" style="left:48px;top:610px;font-size:12px;color:#1e1e1e;">cWebIFrame</div>
<svg style="left:25px;top:628px" width="16" height="16" viewBox="0 0 16 16"><rect x="1.5" y="1.5" width="13" height="13" fill="none" stroke="#505050" stroke-width="1.3"/><path d="M2 13l4-5 3 3 2-2 3 3" fill="none" stroke="#505050" stroke-width="1.3"/><circle cx="10.5" cy="5" r="1.3" fill="#505050"/></svg>
<div class="t" style="left:48px;top:630px;font-size:12px;color:#1e1e1e;">cWebImage</div>
<svg style="left:25px;top:648px" width="16" height="16" viewBox="0 0 16 16"><path d="M2 2h12M8 2v13M6 15h4M2 2v2M14 2v2" stroke="#2a6090" stroke-width="1.6" fill="none"/></svg>
<div class="t" style="left:48px;top:650px;font-size:12px;color:#1e1e1e;">cWebLabel</div>
<svg style="left:25px;top:668px" width="16" height="16" viewBox="0 0 16 16"><rect x="1.5" y="1.5" width="13" height="14" fill="none" stroke="#505050"/><path d="M1.5 5h13M1.5 8.5h13M1.5 12h13M10.5 1.5v14" stroke="#505050"/><rect x="2" y="5" width="8" height="3.5" fill="#6a7a9a"/></svg>
<div class="t" style="left:48px;top:670px;font-size:12px;color:#1e1e1e;">cWebList</div>
<svg style="left:25px;top:688px" width="16" height="16" viewBox="0 0 16 16"><path d="M1.5 .5v3h3v-3M11.5 .5v3h3v-3" fill="none" stroke="#505050"/><path d="M8 8V3" stroke="#505050" stroke-width="1.6"/><path d="M4.8 4.8L8 1.2l3.2 3.6z" fill="#505050"/><path d="M5 8.5h6" stroke="#505050"/><rect x="2.5" y="10.5" width="11" height="5" rx="2" fill="none" stroke="#505050"/></svg>
<div class="t" style="left:48px;top:690px;font-size:12px;color:#1e1e1e;">cWebListSwipeButton</div>
<svg style="left:25px;top:708px" width="16" height="16" viewBox="0 0 16 16"><path d="M1 1.5h13M1 4.5h6" stroke="#505050" stroke-width="1.3"/><rect x="8.5" y="4.5" width="6" height="11" fill="#2a5a90" stroke="#505050"/><path d="M9 7.5h5M9 10.5h5M9 13h5" stroke="#eee"/></svg>
<div class="t" style="left:48px;top:710px;font-size:12px;color:#1e1e1e;">cWebMenuBar</div>
<svg style="left:25px;top:728px" width="16" height="16" viewBox="0 0 16 16"><rect x="1.5" y="1.5" width="9" height="5" rx="2" fill="none" stroke="#505050"/><rect x="8.5" y="7.5" width="6" height="8" fill="#2a5a90" stroke="#505050"/><path d="M9 10.5h5" stroke="#eee"/></svg>
<div class="t" style="left:48px;top:730px;font-size:12px;color:#1e1e1e;">cWebMenuButton</div>
<div class="a" style="left:0px;top:743px;width:310px;height:24px;background:#eeeef0;"></div>
<div class="a" style="left:2px;top:744px;width:99px;height:21px;background:#eaeaee;border:1px solid #dcdce0"></div>
<div class="a" style="left:102px;top:744px;width:99px;height:21px;background:#eaeaee;border:1px solid #dcdce0"></div>
<div class="a" style="left:202px;top:743px;width:104px;height:23px;background:#ffffff;"></div>
<svg style="left:6px;top:747px" width="16" height="16" viewBox="0 0 16 16"><path d="M4.5 .5h11v10" fill="none" stroke="#3a3a3c"/><path d="M2.5 2.5h11v10" fill="none" stroke="#3a3a3c"/><path d="M0 5h12v11H0z" fill="#3a3a3c"/><path d="M1 7h10v8H1z" fill="#eee"/><path d="M1 9h10M1 11.5h10M4 7v8M7.5 7v8" stroke="#3a3a3c"/><circle cx="11" cy="12" r="3" fill="#eee" stroke="#3a3a3c" stroke-width="1.2"/><path d="M13 14l3 2" stroke="#3a3a3c" stroke-width="1.5"/></svg>
<div class="t" style="left:27px;top:746px;font-size:11.7px;color:#1e1e1e;">Table Explor...</div>
<svg style="left:107px;top:747px" width="16" height="16" viewBox="0 0 16 16"><path d="M.5 1.5h15v13H.5z" fill="#fff" stroke="#3a3a3c"/><path d="M.5 1h15v2H.5z" fill="#3a3a3c"/><path d="M3 6l3-2 2 3-3 2zM8 9l3-2 2 3-3 2z" fill="#d9a850"/></svg>
<div class="t" style="left:126px;top:746px;font-size:11.7px;color:#1e1e1e;">Code Explor...</div>
<svg style="left:206px;top:747px" width="16" height="16" viewBox="0 0 16 16"><path d="M8 1C3 1 0 4 0 8s3 7 7 7c2 0 2-2 1-3s0-3 2-3h3c2 0 3-1 3-3C16 3 12 1 8 1z" fill="#3a3a3c"/><circle cx="4" cy="6" r="1.3" fill="#eee"/><circle cx="7" cy="3.5" r="1.3" fill="#eee"/><circle cx="11" cy="4" r="1.3" fill="#eee"/><circle cx="4" cy="10" r="1.3" fill="#eee"/></svg>
<div class="t" style="left:226px;top:747px;font-size:11.7px;color:#1e1e1e;">Class Palette...</div>
<div class="a" style="left:0px;top:771px;width:310px;height:21px;background:#bdcbdc;border:1px solid #9aa4b2;border-top-color:#8a929e;border-bottom:2px solid #c2c9d3"></div><div class="t" style="left:4px;top:774px;font-size:11.7px;color:#1e1e1e;">File Navigator</div><svg style="left:281px;top:777px" width="8" height="10" viewBox="0 0 8 10"><path d="M2 .5v6M5.5 .5v6" stroke="#111" stroke-width="1.3" fill="none"/><path d="M.5 6.5h7" stroke="#111" stroke-width="1.4"/><path d="M3.8 7v2" stroke="#555" stroke-width="1"/></svg><svg style="left:298px;top:778px" width="7" height="7" viewBox="0 0 7 7"><path d="M.5 .5l6 6M6.5 .5l-6 6" stroke="#1e1e1e" stroke-width="1.5"/></svg>
<div class="a" style="left:0px;top:792px;width:310px;height:226px;background:#ffffff;border:1px solid #a9a9b0;border-top:none;border-bottom:none"></div>
<svg style="left:9px;top:794px" width="14" height="16" viewBox="0 0 14 16"><path d="M.5 .5h7l2 2v11h-9z" fill="#fff" stroke="#505050"/><path d="M2 4h5M2 6h5M2 8h5M2 10h3" stroke="#505050"/><rect x="6" y="8" width="7" height="7" fill="#1f5fa8"/><rect x="8" y="8" width="3" height="2" fill="#eee"/></svg>
<div class="t" style="left:27px;top:794px;font-size:11.7px;color:#1e1e1e;"><b>ExpandPanelDemo.wo</b></div>
<div class="a" style="left:318px;top:104px;width:151px;height:18px;background:#0e7bd2;"></div>
<div class="t" style="left:324px;top:105px;font-size:11.7px;color:#e8f6ff;">ExpandPanelDemo.wo*</div>
<svg style="left:456px;top:108px" width="9" height="9" viewBox="0 0 9 9"><path d="M1 1l7 7M8 1L1 8" stroke="#fff" stroke-width="2"/></svg>
<div class="a" style="left:316px;top:121px;width:1309px;height:2px;background:#2e6fa8;"></div>
<svg style="left:1573px;top:106px" width="5" height="9" viewBox="0 0 5 9"><path d="M4.5 .5v8L.5 4.5z" fill="none" stroke="#999"/></svg>
<svg style="left:1587px;top:106px" width="5" height="9" viewBox="0 0 5 9"><path d="M.5 .5v8l4-4z" fill="none" stroke="#999"/></svg>
<svg style="left:1599px;top:109px" width="8" height="5" viewBox="0 0 8 5"><path d="M0 0h8L4 4z" fill="#707070"/></svg>
<svg style="left:1612px;top:105px" width="10" height="10" viewBox="0 0 10 10"><path d="M.8 .8l8.4 8.4M9.2 .8L.8 9.2" stroke="#5a5a5a" stroke-width="1.8"/></svg>
<div class="a" style="left:316px;top:123px;width:1293px;height:682px;background:#ffffff;"></div>
<div class="a" style="left:316px;top:123px;width:24px;height:682px;background:#dcdce8;"></div>
<div class="a" style="left:1609px;top:123px;width:18px;height:682px;background:#ececee;"></div>
<div class="a" style="left:1609px;top:124px;width:15px;height:6px;background:#cdcdcd;"></div>
<svg style="left:1612px;top:135px" width="10" height="8" viewBox="0 0 10 8"><path d="M1 6.5l4-4 4 4" fill="none" stroke="#505050" stroke-width="2"/></svg>
<div class="a" style="left:1609px;top:453px;width:15px;height:334px;background:#cdcdcd;"></div>
<svg style="left:1612px;top:792px" width="10" height="8" viewBox="0 0 10 8"><path d="M1 1.5l4 4 4-4" fill="none" stroke="#505050" stroke-width="2"/></svg>
<div class="a" style="left:316px;top:805px;width:1311px;height:18px;background:#ececee;"></div>
<div class="a" style="left:316px;top:805px;width:6px;height:17px;background:#d8d8dc;"></div>
<svg style="left:327px;top:808px" width="8" height="10" viewBox="0 0 8 10"><path d="M6.5 1l-4 4 4 4" fill="none" stroke="#505050" stroke-width="2"/></svg>
<div class="a" style="left:340px;top:805px;width:911px;height:15px;background:#cdcdcd;"></div>
<svg style="left:1596px;top:807px" width="8" height="10" viewBox="0 0 8 10"><path d="M1.5 1l4 4-4 4" fill="none" stroke="#505050" stroke-width="2"/></svg>
<div class="code" style="left:344px;top:124px">43         <span class="k">Set</span> pbShowHeader <span class="k">to</span> <span class="k">False</span>
44         <span class="k">Set</span> piSortColumn <span class="k">to</span> 0
45 
46         <span class="k">Object</span> oCustomerNumber <span class="k">is</span> <span class="k">a</span> cWebColumn
47             <span class="k">Entry_Item</span> Customer.Customer_Number
48             <span class="k">Set</span> psCaption <span class="k">to</span> <span class="s">"Customer Number"</span>
49             <span class="k">Set</span> piWidth <span class="k">to</span> 63
50             <span class="k">Set</span> psCSSClass <span class="k">to</span> <span class="s">"RowCaption"</span>
51         <span class="k">End_Object</span>
52 
53         <span class="k">Object</span> oCustomerName <span class="k">is</span> <span class="k">a</span> cWebColumn
54             <span class="k">Entry_Item</span> Customer
55             <span class="k">Set</span> psCaption <span class="k">to</span> <span class="s">"Customer Name"</span>
56             <span class="k">Set</span> piWidth <span class="k">to</span> 50
57         <span class="k">End_Object</span>
58 
59         <span class="k">Object</span> oWebColumn3 <span class="k">is</span> <span class="k">a</span> cWebColumn
60             <span class="k">Set</span> psCaption <span class="k">to</span> <span class="s">"column"</span>
61             <span class="k">Set</span> piWidth <span class="k">to</span> 50
62         <span class="k">End_Object</span>
63 
64         <span class="k">Object</span> oWebColumn4 <span class="k">is</span> <span class="k">a</span> cWebColumn
65             <span class="k">Set</span> psCaption <span class="k">to</span> <span class="s">"column"</span>
66             <span class="k">Set</span> piWidth <span class="k">to</span> 50
67         <span class="k">End_Object</span>
68 
69     <span class="k">End_Object</span>
70 <span class="k">End_Object</span>
71 </div>
<div class="a" style="left:618px;top:322px;width:1px;height:17px;background:#000;"></div>
<svg style="left:524px;top:304px" width="8" height="16" viewBox="0 0 8 16"><path d="M1 .5h2.5M4.5 .5H7M4 1v14M1 15.5h2.5M4.5 15.5H7" stroke="#000" stroke-width="1"/></svg>
<div class="a" style="left:314px;top:827px;width:1313px;height:21px;background:#bdcbdc;border:1px solid #9aa4b2;border-top-color:#8a929e;border-bottom:2px solid #c2c9d3"></div><div class="t" style="left:318px;top:830px;font-size:11.7px;color:#1e1e1e;">Output</div><svg style="left:1598px;top:833px" width="8" height="10" viewBox="0 0 8 10"><path d="M2 .5v6M5.5 .5v6" stroke="#111" stroke-width="1.3" fill="none"/><path d="M.5 6.5h7" stroke="#111" stroke-width="1.4"/><path d="M3.8 7v2" stroke="#555" stroke-width="1"/></svg><svg style="left:1615px;top:834px" width="7" height="7" viewBox="0 0 7 7"><path d="M.5 .5l6 6M6.5 .5l-6 6" stroke="#1e1e1e" stroke-width="1.5"/></svg>
<div class="a" style="left:314px;top:848px;width:1313px;height:25px;background:#eeeef0;"></div>
<svg style="left:319px;top:852px" width="16" height="16" viewBox="0 0 16 16"><circle cx="10" cy="9" r="3.5" fill="none" stroke="#8a8a8a" stroke-width="1.2"/><path d="M7.5 11.5L4 15" stroke="#8a8a8a" stroke-width="1.6"/><path d="M6 4H2" stroke="#8a8a8a" stroke-width="1.3"/><path d="M3 1L0 4l3 3z" fill="#8a8a8a"/><path d="M3 1v4" stroke="#8a8a8a"/></svg>
<svg style="left:341px;top:852px" width="16" height="16" viewBox="0 0 16 16"><circle cx="10" cy="9" r="3.5" fill="none" stroke="#8a8a8a" stroke-width="1.2"/><path d="M7.5 11.5L4 15" stroke="#8a8a8a" stroke-width="1.6"/><path d="M1 4h4" stroke="#8a8a8a" stroke-width="1.3"/><path d="M4 1l3 3-3 3z" fill="#8a8a8a"/></svg>
<div class="a" style="left:362px;top:850px;width:1px;height:21px;background:#d2d2d8;"></div>
<svg style="left:368px;top:852px" width="16" height="16" viewBox="0 0 16 16"><path d="M5.5 1.5h6l2 2v8h-8z" fill="none" stroke="#2d2d30" stroke-width="1.2"/><path d="M2.5 5.5h5v10h-5z" fill="#eeeef0" stroke="#2d2d30" stroke-width="1.2"/></svg>
<svg style="left:390px;top:852px" width="16" height="16" viewBox="0 0 16 16"><path d="M2 2l12 12M14 2L2 14" stroke="#a81c1c" stroke-width="2.2"/></svg>
<div class="a" style="left:412px;top:850px;width:1px;height:21px;background:#d2d2d8;"></div>
<svg style="left:418px;top:852px" width="16" height="16" viewBox="0 0 16 16"><path d="M1.5 1.5h9v2M1.5 1.5v9h2" fill="none" stroke="#999"/><path d="M3.5 3.5h9v2M3.5 3.5v9h2" fill="none" stroke="#999"/><path d="M5.5 5.5h10v10h-10z" fill="none" stroke="#999"/><path d="M8 10.5h5M10.5 8v5" stroke="#999"/></svg>
<svg style="left:441px;top:852px" width="16" height="16" viewBox="0 0 16 16"><path d="M1.5 1.5h9v2M1.5 1.5v9h2" fill="none" stroke="#999"/><path d="M3.5 3.5h9v2M3.5 3.5v9h2" fill="none" stroke="#999"/><path d="M5.5 5.5h10v10h-10z" fill="none" stroke="#999"/><path d="M8 10.5h5" stroke="#999"/></svg>
<div class="a" style="left:314px;top:873px;width:1313px;height:121px;background:#ffffff;border:1px solid #a0a0a6"></div>
<div class="a" style="left:314px;top:994px;width:1313px;height:24px;background:#eeeef0;"></div>
<div class="a" style="left:316px;top:994px;width:67px;height:23px;background:#ffffff;"></div>
<div class="a" style="left:535px;top:996px;width:1px;height:19px;background:#d6d6dc;"></div>
<div class="a" style="left:627px;top:996px;width:1px;height:19px;background:#d6d6dc;"></div>
<div class="a" style="left:717px;top:996px;width:1px;height:19px;background:#d6d6dc;"></div>
<div class="a" style="left:922px;top:996px;width:1px;height:19px;background:#d6d6dc;"></div>
<svg style="left:319px;top:997px" width="16" height="16" viewBox="0 0 16 16"><path d="M8 1.5H1.5v13H8" fill="none" stroke="#3a3a3c" stroke-width="1.2"/><path d="M4 8h9" stroke="#3a3a3c" stroke-width="2"/><path d="M10 4l5 4-5 4z" fill="#3a3a3c"/></svg>
<div class="t" style="left:338px;top:997px;font-size:11.7px;color:#1e1e1e;">Output</div>
<svg style="left:387px;top:997px" width="16" height="16" viewBox="0 0 16 16"><path d="M2.5 3.5h11v12h-11z" fill="none" stroke="#3a3a3c" stroke-width="1.2"/><path d="M6 1.5h4v3H6z" fill="#3a3a3c"/><path d="M5 9l2 3 4-6" fill="none" stroke="#3a3a3c" stroke-width="1.4"/></svg>
<div class="t" style="left:405px;top:997px;font-size:11.7px;color:#1e1e1e;">To Do List [WebApp.src]</div>
<svg style="left:540px;top:997px" width="16" height="16" viewBox="0 0 16 16"><path d="M5.5 1.5h6l3 3v11h-9z" fill="none" stroke="#3a3a3c" stroke-width="1.1"/><circle cx="5" cy="10" r="2.6" fill="none" stroke="#1f5fa8" stroke-width="1.2"/><path d="M3 12l-2.5 3" stroke="#1f5fa8" stroke-width="1.5"/></svg>
<div class="t" style="left:560px;top:997px;font-size:11.7px;color:#1e1e1e;">Find Results</div>
<svg style="left:632px;top:997px" width="16" height="16" viewBox="0 0 16 16"><circle cx="6" cy="11" r="4.8" fill="#d00000"/><path d="M4.5 2.5h11v9H11" fill="none" stroke="#2d2d30" stroke-width="1.3"/><path d="M4.5 2h11v2h-11z" fill="#2d2d30"/></svg>
<div class="t" style="left:651px;top:997px;font-size:11.7px;color:#1e1e1e;">Breakpoints</div>
<svg style="left:722px;top:997px" width="16" height="16" viewBox="0 0 16 16"><path d="M.5 1.5h15v13H.5z" fill="none" stroke="#3a3a3c" stroke-width="1.2"/><path d="M.5 1.5h15v2H.5z" fill="#3a3a3c"/><path d="M2 5h12v8H2z" fill="#f0dc40"/><path d="M5 6l-3 6h6z" fill="#3a3a3c"/><path d="M9 9l2 2 3-5" fill="none" stroke="#3a3a3c" stroke-width="1.3"/></svg>
<div class="t" style="left:741px;top:997px;font-size:11.7px;color:#1e1e1e;">Problem Resolution [WebApp.src]</div>
<div class="a" style="left:1631px;top:101px;width:289px;height:21px;background:#bdcbdc;border:1px solid #9aa4b2;border-top-color:#8a929e;border-bottom:2px solid #c2c9d3"></div><div class="t" style="left:1635px;top:104px;font-size:11.7px;color:#1e1e1e;">Workspace Explorer</div><svg style="left:1891px;top:107px" width="8" height="10" viewBox="0 0 8 10"><path d="M2 .5v6M5.5 .5v6" stroke="#111" stroke-width="1.3" fill="none"/><path d="M.5 6.5h7" stroke="#111" stroke-width="1.4"/><path d="M3.8 7v2" stroke="#555" stroke-width="1"/></svg><svg style="left:1908px;top:108px" width="7" height="7" viewBox="0 0 7 7"><path d="M.5 .5l6 6M6.5 .5l-6 6" stroke="#1e1e1e" stroke-width="1.5"/></svg>
<div class="a" style="left:1631px;top:122px;width:289px;height:31px;background:#eeeef0;"></div>
<div class="t" style="left:1636px;top:130px;font-size:11.7px;color:#1e1e1e;">Current Project:</div>
<div class="a" style="left:1726px;top:127px;width:193px;height:23px;background:#e6e6e6;border:1px solid #adadad"></div>
<div class="t" style="left:1730px;top:130px;font-size:11.7px;color:#1e1e1e;">WebApp.src</div>
<svg style="left:1904px;top:135px" width="11" height="7" viewBox="0 0 11 7"><path d="M.5 .5l5 5 5-5" fill="none" stroke="#444" stroke-width="1.2"/></svg>
<div class="a" style="left:1631px;top:154px;width:288px;height:307px;background:#ffffff;border:1px solid #8c8c90"></div>
<svg style="left:1640px;top:162px" width="9" height="9" viewBox="0 0 9 9"><rect x=".5" y=".5" width="8" height="8" fill="#fff" stroke="#9aa0aa"/><path d="M2 4.5h5" stroke="#333"/><path d="M4.5 2v5" stroke="#333"/></svg>
<svg style="left:1652px;top:158px" width="15" height="15" viewBox="0 0 15 15"><path d="M4.5 .5h10v12h-4" fill="none" stroke="#333"/><path d="M4.5 .5h10v2h-10z" fill="#333"/><circle cx="6" cy="9.5" r="4.8" fill="#fff" stroke="#333" stroke-width="1.2"/><path d="M1.5 9.5h9M6 5v9M3.5 7h5M3.5 12h5" stroke="#333" stroke-width=".9"/></svg>
<div class="t" style="left:1673px;top:157px;font-size:11.7px;color:#1e1e1e;">WebApp.src</div>
<div class="a" style="left:1626px;top:461px;width:5px;height:8px;background:#eeeef0;"></div>
<div class="a" style="left:1631px;top:467px;width:289px;height:21px;background:#bdcbdc;border:1px solid #9aa4b2;border-top-color:#8a929e;border-bottom:2px solid #c2c9d3"></div><div class="t" style="left:1635px;top:470px;font-size:11.7px;color:#1e1e1e;">DDO Explorer [ExpandPanelDemo.wo]</div><svg style="left:1891px;top:473px" width="8" height="10" viewBox="0 0 8 10"><path d="M2 .5v6M5.5 .5v6" stroke="#111" stroke-width="1.3" fill="none"/><path d="M.5 6.5h7" stroke="#111" stroke-width="1.4"/><path d="M3.8 7v2" stroke="#555" stroke-width="1"/></svg><svg style="left:1908px;top:474px" width="7" height="7" viewBox="0 0 7 7"><path d="M.5 .5l6 6M6.5 .5l-6 6" stroke="#1e1e1e" stroke-width="1.5"/></svg>
<div class="a" style="left:1631px;top:488px;width:289px;height:28px;background:#eeeef0;"></div>
<svg style="left:1636px;top:491px" width="16" height="16" viewBox="0 0 16 16"><path d="M2.5 5.5h5v10h-5zM8.5 5.5h5v10h-5z" fill="none" stroke="#333" stroke-width="1.1"/><path d="M4 0v6M1 3h6" stroke="#2a9a2a" stroke-width="1.6"/></svg>
<svg style="left:1658px;top:491px" width="16" height="16" viewBox="0 0 16 16"><path d="M9.5 .5h3v3h-3zM12.5 .5h3v3h-3z" fill="none" stroke="#888"/><path d="M1 8a3 1.2 0 0 1 6 0v6a3 1.2 0 0 1-6 0z" fill="#888"/><path d="M2 5V2h4M14 8v5h-4" fill="none" stroke="#888"/></svg>
<svg style="left:1680px;top:491px" width="16" height="16" viewBox="0 0 16 16"><path d="M4.5 .5h5v10h-5zM9.5 .5h5v10h-5z" fill="none" stroke="#888"/><circle cx="4.5" cy="11.5" r="4" fill="#888"/><path d="M2.5 13.5v-3h4v3M4.5 10.5v3" fill="none" stroke="#fff" stroke-width=".9"/></svg>
<div class="a" style="left:1701px;top:489px;width:1px;height:22px;background:#d2d2d8;"></div>
<svg style="left:1707px;top:491px" width="16" height="16" viewBox="0 0 16 16"><path d="M1.5 2.5h6v12h-6zM8.5 2.5h6v12h-6z" fill="none" stroke="#999" stroke-width="1.1"/></svg>
<svg style="left:1730px;top:491px" width="16" height="16" viewBox="0 0 16 16"><path d="M1 1l5 5M6 1L1 6" stroke="#c02020" stroke-width="1.2"/><path d="M6.5 1.5h5v4h-5zM1.5 10.5h5v4h-5zM9.5 10.5h5v4h-5z" fill="none" stroke="#333" stroke-width="1.2"/><path d="M9 5.5v3H4v2M9 8.5h3v2" fill="none" stroke="#333"/></svg>
<div class="a" style="left:1751px;top:489px;width:1px;height:22px;background:#d2d2d8;"></div>
<svg style="left:1758px;top:491px" width="16" height="16" viewBox="0 0 16 16"><path d="M6.5 1.5h8v4h-8zM1.5 10.5h8v4h-8z" fill="none" stroke="#999" stroke-width="1.1"/><path d="M6.5 3.5h8" stroke="#999" stroke-width="2"/><path d="M1 3h4M3 1v4" stroke="#999" stroke-width="1.2"/><path d="M10 5.5v3H5v2" fill="none" stroke="#999"/></svg>
<svg style="left:1780px;top:491px" width="16" height="16" viewBox="0 0 16 16"><path d="M6.5 1.5h8v4h-8zM1.5 10.5h8v4h-8z" fill="none" stroke="#999" stroke-width="1.1"/><path d="M6.5 3.5h8" stroke="#999" stroke-width="2"/><path d="M1 3h4" stroke="#999" stroke-width="1.2"/><path d="M10 5.5v3H5v2" fill="none" stroke="#999"/></svg>
<div class="a" style="left:1631px;top:516px;width:287px;height:477px;background:#ffffff;border:1px solid #8c8c90"></div>
<div class="a" style="left:1644px;top:533px;width:1px;height:67px;background:repeating-linear-gradient(#909090 0 1px,transparent 1px 2px)"></div>
<div class="a" style="left:1659px;top:534px;width:1px;height:46px;background:repeating-linear-gradient(#909090 0 1px,transparent 1px 2px)"></div>
<div class="a" style="left:1660px;top:545px;width:8px;height:1px;background:repeating-linear-gradient(90deg,#909090 0 1px,transparent 1px 2px)"></div>
<div class="a" style="left:1660px;top:563px;width:8px;height:1px;background:repeating-linear-gradient(90deg,#909090 0 1px,transparent 1px 2px)"></div>
<div class="a" style="left:1649px;top:527px;width:4px;height:1px;background:repeating-linear-gradient(90deg,#909090 0 1px,transparent 1px 2px)"></div>
<div class="a" style="left:1649px;top:599px;width:4px;height:1px;background:repeating-linear-gradient(90deg,#909090 0 1px,transparent 1px 2px)"></div>
<svg style="left:1640px;top:523px" width="9" height="9" viewBox="0 0 9 9"><rect x=".5" y=".5" width="8" height="8" fill="#fff" stroke="#9aa0aa"/><path d="M2 4.5h5" stroke="#333"/></svg>
<svg style="left:1640px;top:595px" width="9" height="9" viewBox="0 0 9 9"><rect x=".5" y=".5" width="8" height="8" fill="#fff" stroke="#9aa0aa"/><path d="M2 4.5h5" stroke="#333"/><path d="M4.5 2v5" stroke="#333"/></svg>
<svg style="left:1655px;top:575px" width="9" height="9" viewBox="0 0 9 9"><rect x=".5" y=".5" width="8" height="8" fill="#fff" stroke="#9aa0aa"/><path d="M2 4.5h5" stroke="#333"/><path d="M4.5 2v5" stroke="#333"/></svg>
<svg style="left:1653px;top:520px" width="14" height="14" viewBox="0 0 14 14"><path d="M5.5 .5h4v3.5h-4zM.5 9.5h4v4h-4zM9.5 9.5h4v4h-4z" fill="none" stroke="#333" stroke-width="1.1"/><path d="M7.5 4v3H2.5v2.5M7.5 7h4.5v2.5" fill="none" stroke="#333"/></svg>
<div class="t" style="left:1674px;top:519px;font-size:11.7px;color:#1e1e1e;"><b>DDOs for oExpandPanelDemo</b></div>
<svg style="left:1668px;top:538px" width="14" height="14" viewBox="0 0 14 14"><path d="M.5 1.5h6v11h-6zM7.5 1.5h6v11h-6z" fill="none" stroke="#333" stroke-width="1.1"/></svg>
<div class="t" style="left:1688px;top:537px;font-size:11.7px;color:#1e1e1e;">cSalesPersonDataDictionary</div>
<svg style="left:1668px;top:556px" width="14" height="16" viewBox="0 0 14 16"><path d="M.5 1.5h6v11h-6zM7.5 1.5h6v11h-6z" fill="none" stroke="#333" stroke-width="1.1"/><circle cx="3.5" cy="11.5" r="3.8" fill="#333"/><path d="M1.5 13.5v-3h4v3M3.5 10.5v3" fill="none" stroke="#fff" stroke-width=".9"/></svg>
<div class="t" style="left:1688px;top:555px;font-size:11.7px;color:#1e1e1e;">cCustomerDataDictionary [Main DDO]</div>
<svg style="left:1668px;top:574px" width="14" height="14" viewBox="0 0 14 14"><path d="M.5 1.5h6v11h-6zM7.5 1.5h6v11h-6z" fill="none" stroke="#333" stroke-width="1.1"/></svg>
<div class="t" style="left:1688px;top:573px;font-size:11.7px;color:#1e1e1e;width:229px;overflow:hidden">cOrderHeaderDataDictionary [Constrained </div>
<svg style="left:1653px;top:592px" width="14" height="14" viewBox="0 0 14 14"><path d="M5.5 .5h4v3.5h-4zM.5 9.5h4v4h-4zM9.5 9.5h4v4h-4z" fill="none" stroke="#333" stroke-width="1.1"/><path d="M7.5 4v3H2.5v2.5M7.5 7h4.5v2.5" fill="none" stroke="#333"/></svg>
<div class="t" style="left:1674px;top:591px;font-size:11.7px;color:#1e1e1e;"><b>DDO Column Selector</b></div>
<div class="a" style="left:1632px;top:975px;width:285px;height:16px;background:#ececee;"></div>
<svg style="left:1638px;top:978px" width="8" height="10" viewBox="0 0 8 10"><path d="M6.5 1l-4 4 4 4" fill="none" stroke="#505050" stroke-width="2"/></svg>
<div class="a" style="left:1650px;top:975px;width:160px;height:15px;background:#cdcdcd;"></div>
<svg style="left:1902px;top:978px" width="8" height="10" viewBox="0 0 8 10"><path d="M1.5 1l4 4-4 4" fill="none" stroke="#505050" stroke-width="2"/></svg>
<div class="a" style="left:1634px;top:995px;width:130px;height:22px;background:#eaeaee;border:1px solid #dcdce0"></div>
<div class="a" style="left:1765px;top:994px;width:152px;height:24px;background:#ffffff;"></div>
<svg style="left:1637px;top:997px" width="16" height="16" viewBox="0 0 16 16"><path d="M5.5 1.5h10v14h-10z" fill="none" stroke="#3a3a3c" stroke-width="1.2"/><path d="M7 4h7M7 6.5h7M7 9h7M7 11.5h7" stroke="#3a3a3c" stroke-width="1"/><path d="M1 9h4v7H1z" fill="#3a3a3c"/></svg>
<div class="t" style="left:1657px;top:997px;font-size:11.7px;color:#1e1e1e;">Properties (Inactive)</div>
<svg style="left:1769px;top:997px" width="16" height="16" viewBox="0 0 16 16"><path d="M8 2.5a3.5 1.5 0 0 1 7 0v8a3.5 1.5 0 0 1-7 0z" fill="#3a3a3c"/><path d="M8 2.5a3.5 1.5 0 0 0 7 0" fill="none" stroke="#eee" stroke-width=".6"/><path d="M3 8h2v2H3zM0 13h2.5v2.5H0zM5.5 13H8v2.5H5.5z" fill="#3a3a3c"/><path d="M4 10v2M1.2 13v-1h5.5v1" fill="none" stroke="#3a3a3c"/></svg>
<div class="t" style="left:1788px;top:997px;font-size:11.7px;color:#1e1e1e;">DDO Explorer [Expan...</div>
<div class="a" style="left:0px;top:1018px;width:1920px;height:23px;background:#0a7bd0;"></div>
<div class="t" style="left:3px;top:1022px;font-size:12px;color:#f0f8ff;">C:\projects\WebListDemo\AppSrc\ExpandPanelDemo.wo</div>
<div class="t" style="left:1537px;top:1022px;font-size:11.7px;color:#f0f8ff;">Ln 54</div>
<div class="t" style="left:1577px;top:1022px;font-size:11.7px;color:#f0f8ff;">Col 32</div>
<svg style="left:1759px;top:1022px" width="16" height="16" viewBox="0 0 16 16"><circle cx="8" cy="8" r="6.5" fill="none" stroke="#e8f0f8" stroke-width="2"/><path d="M3.5 3.5l9 9" stroke="#e8f0f8" stroke-width="2"/></svg>
<div class="t" style="left:1793px;top:1022px;font-size:11.7px;color:#f0f8ff;">INS</div>
<div class="t" style="left:1837px;top:1022px;font-size:11.7px;color:#7cc0ee;">CAPS</div>
<div class="t" style="left:1881px;top:1022px;font-size:11.7px;color:#f0f8ff;">NUM</div>
<div class="a" style="left:0px;top:1040px;width:1920px;height:40px;background:#1d458f;"></div>
<div class="a" style="left:196px;top:1040px;width:48px;height:40px;background:#2f5aa0;"></div>
<div class="a" style="left:151px;top:1078px;width:40px;height:2px;background:#8aa8d8;"></div>
<div class="a" style="left:196px;top:1078px;width:48px;height:2px;background:#9ab8e8;"></div>
<svg style="left:16px;top:1052px" width="17" height="17" viewBox="0 0 17 17"><path d="M0 2.3l6.8-1v6.4H0zM7.6 1.2L17 0v7.7H7.6zM0 8.5h6.8v6.5L0 14zM7.6 8.5H17V17l-9.4-1.3z" fill="#fff"/></svg>
<svg style="left:63px;top:1051px" width="18" height="18" viewBox="0 0 18 18"><circle cx="11" cy="7" r="5.8" fill="none" stroke="#fff" stroke-width="1.5"/><path d="M7 11.5L1 17.5" stroke="#fff" stroke-width="1.8"/></svg>
<svg style="left:111px;top:1052px" width="18" height="17" viewBox="0 0 18 17"><path d="M.5 .5h17M.5 16.5h17" stroke="#fff"/><rect x="1.5" y="3.5" width="10" height="10" fill="none" stroke="#fff" stroke-width="1.3"/><path d="M14.5 3v11M17 3v11" stroke="#fff" stroke-width="1.3"/></svg>
<svg style="left:159px;top:1048px" width="24" height="24" viewBox="0 0 24 24"><circle cx="12" cy="12" r="11.5" fill="#db4437"/><path d="M12 12L2 6A11.5 11.5 0 0 1 22 6z" fill="#db4437"/><path d="M12 12l10-6A11.5 11.5 0 0 1 12 23.5z" fill="#f4c20d"/><path d="M12 12L12 23.5A11.5 11.5 0 0 1 2 6z" fill="#0f9d58"/><circle cx="12" cy="12" r="5.3" fill="#fff"/><circle cx="12" cy="12" r="4.2" fill="#4285f4"/></svg>
<svg style="left:207px;top:1047px" width="25" height="24" viewBox="0 0 25 24"><path d="M0 0h25v17c0 4-3 7-7 7H0z" fill="#e0401a"/><text x="12.5" y="18" font-size="15" font-family="Liberation Sans" font-weight="bold" fill="#fff" text-anchor="middle">DF</text></svg>
</body></html>
